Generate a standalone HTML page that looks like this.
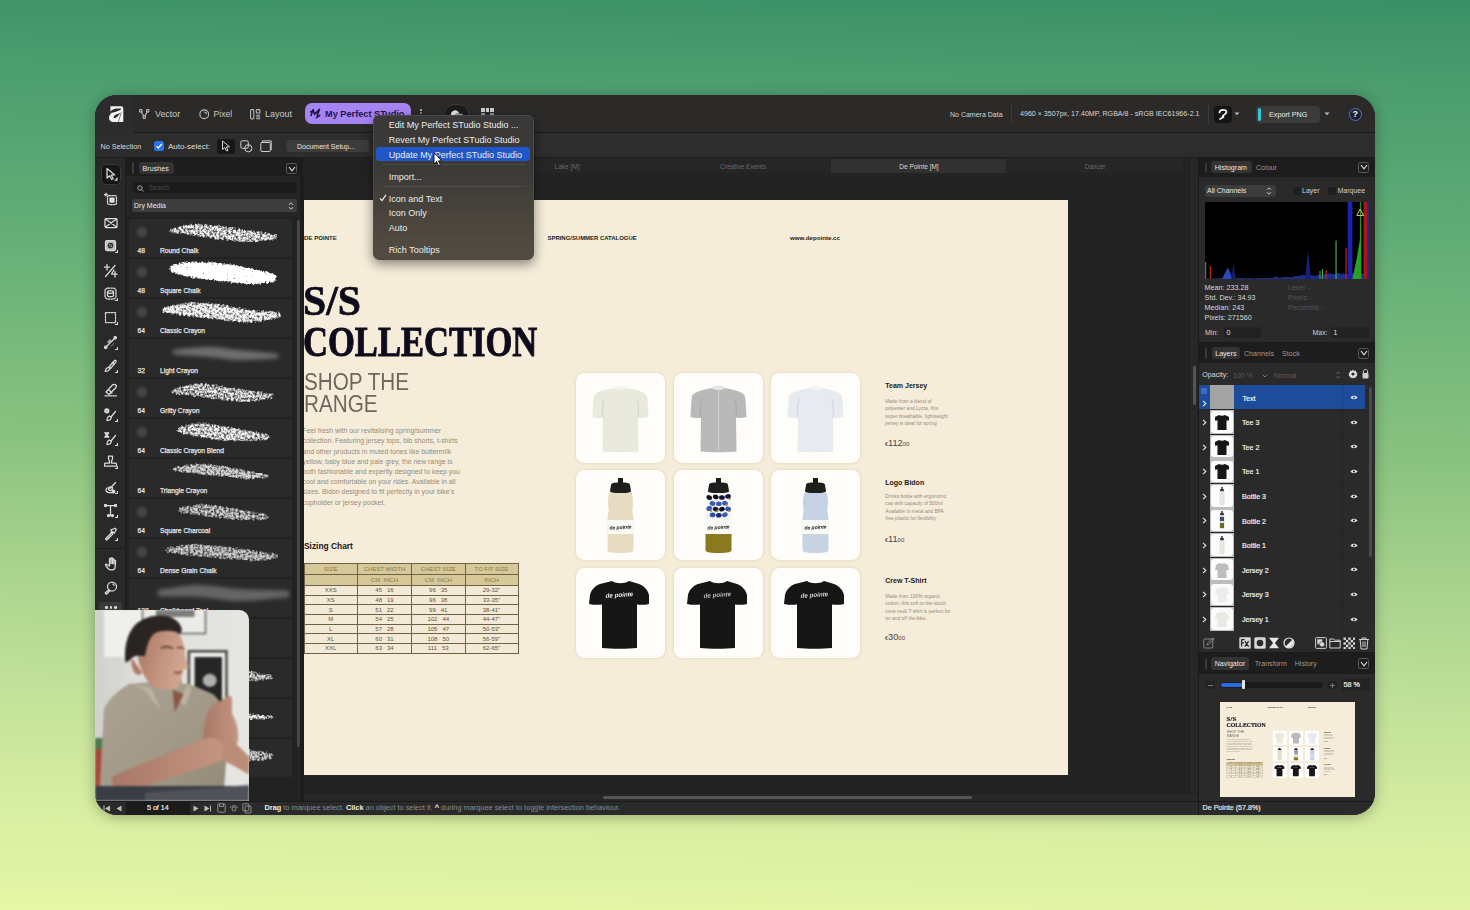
<!DOCTYPE html>
<html><head><meta charset="utf-8">
<style>
*{margin:0;padding:0;box-sizing:border-box}
html,body{width:1470px;height:910px;overflow:hidden}
body{position:relative;font-family:"Liberation Sans",sans-serif;background:linear-gradient(181deg,#3a8f66 0.0%,#4a9c6e 8.2%,#54a472 16.5%,#6db479 33.0%,#8ac380 49.5%,#aed690 65.9%,#c3e29a 76.9%,#d6eda1 87.9%,#e6f7a6 100.0%);color:#ddd}
.a{position:absolute}
.win{left:95px;top:95px;width:1280px;height:720px;border-radius:22px;background:#2a2a2a;overflow:hidden;box-shadow:0 2px 14px rgba(0,0,0,.30)}
.o{position:absolute;left:-95px;top:-95px;width:1470px;height:910px}
.t{position:absolute;white-space:nowrap;line-height:1}
.bt{font-size:6.7px;color:#e4e4e4;-webkit-text-stroke:0.25px #e4e4e4}
</style></head><body>
<div class="a win"><div class="o">
  <!-- top bar -->
  <div class="a" style="left:95px;top:95px;width:1280px;height:38px;background:#2b2a29;border-bottom:1px solid #1b1b1b"></div>
  <div class="a" style="left:95px;top:95px;width:39px;height:38px;background:#2c2c2c"></div>
  <!-- context bar -->
  <div class="a" style="left:95px;top:133px;width:1280px;height:25px;background:#2d2d2d;border-bottom:1px solid #1c1c1c"></div>

  <!-- TOPBAR CONTENT -->
  <svg class="a" style="left:108.6px;top:105.6px" width="15" height="17" viewBox="0 0 15 17"><path d="M1.4 0.3 H12 C13.6 0.3 14.3 1.3 14.3 2.8 V15.9 H4.5 C2 15.9 0 14.5 0 12 C0 10 1 8.5 2.4 7.3 L1.4 7.3 Z" fill="#f4f4f4"/><path d="M1.4 5.3 C3 4 5 2.9 8 2.6 L11.8 2.6 C12.4 2.8 12.2 3.6 11.4 4.1 C9 5 5 6.5 1.4 7.3 Z" fill="#2a2a2a"/><path d="M4.6 11 C4.6 9.8 6 9 8 8.2 L11.5 6.8 L8.5 10.5 C7 11.8 5.8 12.3 5.2 12 C4.8 11.8 4.6 11.5 4.6 11 Z" fill="#2a2a2a"/><path d="M12.2 6.4 L9.4 16.2" stroke="#2a2a2a" stroke-width="0.55"/></svg>
  <svg class="a" style="left:139px;top:109px" width="10.5" height="10" viewBox="0 0 10.5 10" fill="none" stroke="#bdbdbd" stroke-width="1.1"><circle cx="1.8" cy="1.8" r="1.3"/><circle cx="8.7" cy="1.8" r="1.3"/><circle cx="5.25" cy="8.2" r="1.3"/><path d="M2.4 3 L4.6 7.1 M8.1 3 L5.9 7.1"/></svg>
  <div class="t" style="left:155px;top:110px;font-size:8.9px;color:#c9c9c9">Vector</div>
  <svg class="a" style="left:198.5px;top:109px" width="10.5" height="10.5" viewBox="0 0 10.5 10.5" fill="none" stroke="#bdbdbd" stroke-width="1.1"><circle cx="5.25" cy="5.25" r="4.4"/><path d="M5.2 3 A2.3 2.3 0 0 1 7.5 5.3"/></svg>
  <div class="t" style="left:213.5px;top:110px;font-size:8.6px;color:#c9c9c9">Pixel</div>
  <svg class="a" style="left:249.5px;top:109px" width="11" height="10.5" viewBox="0 0 11 10.5" fill="none" stroke="#bdbdbd" stroke-width="1.05"><rect x="0.6" y="0.6" width="3.2" height="9.3" rx="0.8"/><rect x="6.3" y="0.6" width="3.6" height="3.4" rx="0.7"/><path d="M6.2 6.2 H10.2 M6.2 8 H10.2 M6.2 9.7 H10.2"/></svg>
  <div class="t" style="left:265px;top:110px;font-size:9px;color:#c9c9c9">Layout</div>
  <div class="a" style="left:304.5px;top:103px;width:106px;height:21px;border-radius:7px;background:#a784f3"></div>
  <svg class="a" style="left:300px;top:100px" width="22" height="22" viewBox="0 0 22 22" fill="none" stroke="#1c1044" stroke-width="1.5" stroke-linecap="round" stroke-linejoin="round"><path d="M11 15.6 L13.2 9.5 L14.5 14.4 L19.5 9.4 L17.2 15.4 M10.6 11.9 L13.2 10.8 M16.4 17.7 L19.8 15.3"/></svg>
  <div class="t" style="left:325px;top:109.5px;font-size:9.2px;font-weight:bold;color:#1f1548">My Perfect STudio</div>
  <div class="a" style="left:420px;top:108.5px;width:2.4px;height:2.4px;border-radius:50%;background:#d8d8d8"></div>
  <div class="a" style="left:420px;top:112px;width:2.2px;height:2.2px;border-radius:50%;background:#9a9a9a"></div>
  <div class="a" style="left:444px;top:104px;width:25px;height:20px;border-radius:10px;background:#1b1b1b;border:1px solid #3a3a3a"></div>
  <svg class="a" style="left:449.5px;top:107.5px" width="14" height="8" viewBox="0 0 14 8"><path d="M1 7.5 A4.2 4.2 0 0 1 9.2 5.5 L6 5.5 L5 7.5 Z" fill="#e6e6e6"/><path d="M5.5 6.2 H12.5" stroke="#cfcfcf" stroke-width="1.1"/></svg>
  <div class="a" style="left:481px;top:108px;width:3.5px;height:3.5px;background:#cfcfcf"></div>
  <div class="a" style="left:485.5px;top:108px;width:3.5px;height:3.5px;background:#cfcfcf"></div>
  <div class="a" style="left:490px;top:108px;width:3.5px;height:3.5px;background:#cfcfcf"></div>
  <div class="a" style="left:481px;top:112.5px;width:3.5px;height:3.5px;background:#8f8f8f"></div>
  <div class="a" style="left:490px;top:112.5px;width:3.5px;height:3.5px;background:#8f8f8f"></div>

  <div class="t" style="left:950px;top:110.5px;font-size:7px;color:#d6d6d6">No Camera Data</div>
  <div class="a" style="left:1011px;top:104px;width:1px;height:20px;background:#3a3a3a"></div>
  <div class="t" style="left:1020px;top:110.5px;font-size:7.1px;color:#d6d6d6">4960 × 3507px, 17.40MP, RGBA/8 - sRGB IEC61966-2.1</div>
  <div class="a" style="left:1208px;top:104px;width:1px;height:20px;background:#3a3a3a"></div>
  <div class="a" style="left:1214px;top:106px;width:18px;height:17px;border-radius:4px;background:#141414"></div>
  <svg class="a" style="left:1217px;top:108px" width="12" height="13" viewBox="0 0 12 13" fill="none" stroke="#f0f0f0" stroke-width="1.7" stroke-linecap="round"><path d="M2.5 4.5 C2.5 1.2 9.5 0.8 9.5 4 C9.5 6.5 6 6.3 5.5 8.5 M3 11 L6.5 9"/></svg>
  <svg class="a" style="left:1234px;top:112px" width="6" height="4" viewBox="0 0 6 4"><path d="M0.5 0.5 L3 3.2 L5.5 0.5 Z" fill="#bbb"/></svg>
  <div class="a" style="left:1256px;top:106px;width:64px;height:17px;border-radius:4px;background:#3b3b3b"></div>
  <div class="a" style="left:1258px;top:108px;width:3px;height:13px;border-radius:1.5px;background:#33c6d6"></div>
  <div class="t" style="left:1269px;top:110.5px;font-size:7.2px;color:#ececec">Export PNG</div>
  <svg class="a" style="left:1324px;top:112px" width="6" height="4" viewBox="0 0 6 4"><path d="M0.5 0.5 L3 3.2 L5.5 0.5 Z" fill="#bbb"/></svg>
  <div class="a" style="left:1349px;top:107.5px;width:13px;height:13px;border-radius:50%;border:1.2px solid #5877b8;background:#1c2233"></div>
  <div class="t" style="left:1352.5px;top:109.5px;font-size:9px;font-weight:bold;color:#f4f4f4">?</div>

  <!-- CONTEXT BAR CONTENT -->
  <div class="t" style="left:100.5px;top:143px;font-size:7.2px;color:#dcdcdc">No Selection</div>
  <div class="a" style="left:154px;top:141px;width:10px;height:10px;border-radius:2.5px;background:#2a73e6"></div>
  <svg class="a" style="left:155px;top:142px" width="8" height="8" viewBox="0 0 8 8" fill="none" stroke="#fff" stroke-width="1.3"><path d="M1.5 4.2 L3.3 6 L6.8 1.8"/></svg>
  <div class="t" style="left:168px;top:142.7px;font-size:8px;color:#dcdcdc">Auto-select:</div>
  <div class="a" style="left:217px;top:139px;width:18px;height:14.5px;border-radius:3px;background:#171717"></div>
  <svg class="a" style="left:221px;top:140px" width="10" height="12" viewBox="0 0 10 12" fill="none" stroke="#d6d6d6" stroke-width="1"><path d="M1.5 1 L1.5 9.5 L3.8 7.5 L5.5 11 L7 10.3 L5.4 7 L8.5 6.8 Z"/></svg>
  <svg class="a" style="left:239.5px;top:140px" width="13" height="13" viewBox="0 0 13 13" fill="none" stroke="#cfcfcf" stroke-width="1"><rect x="0.8" y="0.8" width="7.5" height="7.5" rx="1.5"/><circle cx="8.3" cy="8.3" r="3.6"/></svg>
  <svg class="a" style="left:259.5px;top:140px" width="12" height="12" viewBox="0 0 12 12" fill="none" stroke="#cfcfcf" stroke-width="1"><rect x="0.8" y="2.5" width="9.5" height="9" rx="1.2"/><path d="M2.5 2.5 V0.9 H11.2 V9.8 H10.3"/></svg>
  <div class="a" style="left:286px;top:139.5px;width:83px;height:12.5px;border-radius:3px;background:#3c3c3c"></div>
  <div class="t" style="left:297px;top:143px;font-size:7px;color:#e4e4e4">Document Setup...</div>
  <!-- tools column -->
  <div class="a" style="left:95px;top:158px;width:31px;height:643px;background:#292929;border-right:1px solid #1e1e1e"></div>
  <!-- brushes panel -->
  <div class="a" style="left:126px;top:158px;width:177px;height:643px;background:#252525"></div>
  <div class="a" style="left:126px;top:158px;width:177px;height:18px;background:#1d1d1d"></div>

  <!-- TOOLS CONTENT -->
  <div class="a" style="left:100.8px;top:163.8px;width:20px;height:21px;border-radius:4.5px;background:#161616;border:1px solid #3a3a3a"></div>
  <div class="a" style="left:95px;top:548px;width:31px;height:1px;background:#1e1e1e"></div>
  <div class="a" style="left:99px;top:602px;width:23px;height:10px;background:#3a3a3a;border-radius:2px"></div>
  <div class="a" style="left:105px;top:606px;width:2.5px;height:2.5px;background:#ddd;border-radius:50%"></div>
  <div class="a" style="left:109.5px;top:606px;width:2.5px;height:2.5px;background:#ddd;border-radius:50%"></div>
  <div class="a" style="left:114px;top:606px;width:2.5px;height:2.5px;background:#ddd;border-radius:50%"></div>
  <svg class="a" style="left:104px;top:167px" width="14" height="14" viewBox="0 0 14 14" fill="none" stroke="#dcdcdc" stroke-width="1.25" stroke-linecap="round" stroke-linejoin="round"><path d="M3 1.5 V11 L5.6 8.8 L7.6 12.5 L9.2 11.7 L7.3 8.2 L10.6 8 Z"/><path d="M13 11 V13 H11" /></svg>
  <svg class="a" style="left:104px;top:191.5px" width="14" height="14" viewBox="0 0 14 14" fill="none" stroke="#dcdcdc" stroke-width="1.25" stroke-linecap="round" stroke-linejoin="round"><path d="M2 1 V4 M0.5 2.5 H3.5"/><rect x="3.5" y="3.5" width="9" height="9" rx="1.5" stroke-dasharray="1.6 1.2"/><rect x="6" y="6" width="4" height="4" fill="#e0e0e0"/></svg>
  <svg class="a" style="left:104px;top:215.5px" width="14" height="14" viewBox="0 0 14 14" fill="none" stroke="#dcdcdc" stroke-width="1.25" stroke-linecap="round" stroke-linejoin="round"><rect x="1" y="2.5" width="12" height="9" rx="1"/><path d="M1.5 3 L12.5 11 M12.5 3 L1.5 11"/></svg>
  <svg class="a" style="left:104px;top:239px" width="14" height="14" viewBox="0 0 14 14" fill="none" stroke="#dcdcdc" stroke-width="1.25" stroke-linecap="round" stroke-linejoin="round"><rect x="1.5" y="1.5" width="10" height="10" rx="1.5" fill="#bdbdbd"/><circle cx="6.5" cy="6.5" r="2.2" stroke="#333"/><path d="M5 8 L8 5" stroke="#333"/><path d="M13.5 11.5 V13.5 H11.5"/></svg>
  <svg class="a" style="left:104px;top:263.6px" width="14" height="14" viewBox="0 0 14 14" fill="none" stroke="#dcdcdc" stroke-width="1.25" stroke-linecap="round" stroke-linejoin="round"><path d="M3 0.5 V6 M0.5 3 H5.5 M1.5 12.5 L11 1.5 M10 6 L7.5 10 H13 M11 7.5 V13"/></svg>
  <svg class="a" style="left:104px;top:286.7px" width="14" height="14" viewBox="0 0 14 14" fill="none" stroke="#dcdcdc" stroke-width="1.25" stroke-linecap="round" stroke-linejoin="round"><rect x="1" y="1" width="11" height="11" rx="3" stroke-dasharray="1.6 1.2"/><ellipse cx="6.5" cy="5" rx="3" ry="1.3"/><path d="M3.5 5 V8.5 C3.5 10 9.5 10 9.5 8.5 V5"/><path d="M13.5 11.5 V13.5 H11.5"/></svg>
  <svg class="a" style="left:104px;top:311.4px" width="14" height="14" viewBox="0 0 14 14" fill="none" stroke="#dcdcdc" stroke-width="1.25" stroke-linecap="round" stroke-linejoin="round"><rect x="1.5" y="1.5" width="10" height="10" stroke-dasharray="1.6 1.3"/><path d="M13.5 11.5 V13.5 H11.5"/></svg>
  <svg class="a" style="left:104px;top:335.6px" width="14" height="14" viewBox="0 0 14 14" fill="none" stroke="#dcdcdc" stroke-width="1.25" stroke-linecap="round" stroke-linejoin="round"><path d="M1.5 11.5 L11.5 1.5"/><circle cx="1.8" cy="11.3" r="1.2"/><circle cx="11.2" cy="1.8" r="1.2"/><path d="M3 6 L6 3 L8 5 L5 8 Z M6 11 L11 6 L9 9 Z" fill="#aaa" stroke="none"/><path d="M13.5 11.5 V13.5 H11.5"/></svg>
  <svg class="a" style="left:104px;top:359px" width="14" height="14" viewBox="0 0 14 14" fill="none" stroke="#dcdcdc" stroke-width="1.25" stroke-linecap="round" stroke-linejoin="round"><path d="M5 8 L10.5 1.5 C11.5 0.8 12.6 1.8 12 2.8 L6.5 9.5 Z"/><path d="M4.5 8.5 C2.5 8.5 1.5 10.5 1.3 12.5 C3.5 12.3 5.5 11.3 5.8 9.5"/><path d="M8.5 3.5 L10 5"/><path d="M13.5 11.5 V13.5 H11.5"/></svg>
  <svg class="a" style="left:104px;top:383px" width="14" height="14" viewBox="0 0 14 14" fill="none" stroke="#dcdcdc" stroke-width="1.25" stroke-linecap="round" stroke-linejoin="round"><path d="M2 9 L8.5 2 C9.5 1 11 1 11.8 2 C12.6 2.8 12.4 4 11.5 5 L5 11.5 Z M4.5 6.5 L8 10"/><path d="M1 12.8 H12.5" stroke-dasharray="1.6 1"/></svg>
  <svg class="a" style="left:104px;top:408px" width="14" height="14" viewBox="0 0 14 14" fill="none" stroke="#dcdcdc" stroke-width="1.25" stroke-linecap="round" stroke-linejoin="round"><circle cx="2.8" cy="2.8" r="2" fill="#bbb"/><path d="M7 9 L11.5 3.5 M5.5 8 C3.5 8.5 3 10.5 3 12.5 C5 12.5 7 11.5 7.3 9.5 Z"/><path d="M13.5 11.5 V13.5 H11.5"/></svg>
  <svg class="a" style="left:104px;top:431.5px" width="14" height="14" viewBox="0 0 14 14" fill="none" stroke="#dcdcdc" stroke-width="1.25" stroke-linecap="round" stroke-linejoin="round"><path d="M0.8 0.8 H4.8 L2.8 3 L4.8 5 H0.8 L2.8 3 Z" fill="#bbb"/><path d="M7 9 L11.5 3.5 M5.5 8 C3.5 8.5 3 10.5 3 12.5 C5 12.5 7 11.5 7.3 9.5 Z"/><path d="M13.5 11.5 V13.5 H11.5"/></svg>
  <svg class="a" style="left:104px;top:455px" width="14" height="14" viewBox="0 0 14 14" fill="none" stroke="#dcdcdc" stroke-width="1.25" stroke-linecap="round" stroke-linejoin="round"><path d="M4.5 1 H8.5 V3.5 C8.5 5 7.5 5.5 7.5 6.5 V8 H11.5 C12.2 8 12.5 8.5 12.5 9.2 V11 H0.5 V9.2 C0.5 8.5 0.8 8 1.5 8 H5.5 V6.5 C5.5 5.5 4.5 5 4.5 3.5 Z"/><path d="M13.5 11.5 V13.5 H11.5"/></svg>
  <svg class="a" style="left:104px;top:479.8px" width="14" height="14" viewBox="0 0 14 14" fill="none" stroke="#dcdcdc" stroke-width="1.25" stroke-linecap="round" stroke-linejoin="round"><path d="M3 8 C1 10 2 12.5 5 12.5 H9"/><path d="M6 8.5 L11.5 2.5 M5 7 C4 9 4.5 10.5 6.5 10.5 C8.5 10 9 8 8 7 Z"/><circle cx="9.5" cy="11.5" r="1.3" fill="#ddd"/><path d="M13.5 11.5 V13.5 H11.5"/></svg>
  <svg class="a" style="left:104px;top:504px" width="14" height="14" viewBox="0 0 14 14" fill="none" stroke="#dcdcdc" stroke-width="1.25" stroke-linecap="round" stroke-linejoin="round"><path d="M1.5 1.5 H11.5 M6.5 1.5 V11.5 M4.5 11.5 H8.5"/><circle cx="1.5" cy="1.5" r="1" fill="#ddd"/><circle cx="11.5" cy="1.5" r="1" fill="#ddd"/><circle cx="4.5" cy="11.5" r="1" fill="#ddd"/><circle cx="8.5" cy="11.5" r="1" fill="#ddd"/><path d="M13.5 11.5 V13.5 H11.5"/></svg>
  <svg class="a" style="left:104px;top:527px" width="14" height="14" viewBox="0 0 14 14" fill="none" stroke="#dcdcdc" stroke-width="1.25" stroke-linecap="round" stroke-linejoin="round"><path d="M1.5 12 L7.5 5.8 L8.8 7 L2.8 13 Z"/><path d="M7 5.3 L8 4.3 L6.8 3 L11 1.2 L12.3 2.5 L10.2 6.2 L9 5 L8.3 6 Z"/><path d="M13.5 11.5 V13.5 H11.5"/></svg>
  <svg class="a" style="left:104px;top:556.7px" width="14" height="14" viewBox="0 0 14 14" fill="none" stroke="#dcdcdc" stroke-width="1.25" stroke-linecap="round" stroke-linejoin="round"><path d="M3 7.5 C2 6.5 1 7.5 1.8 8.5 L4.5 12 C5.5 13 9 13.5 10.5 12 C11.5 10.5 11.5 8 11.5 4 C11.5 3 10.2 3 10 4 V7 V2.5 C10 1.5 8.5 1.5 8.5 2.5 V6.5 V1.5 C8.5 0.5 7 0.5 7 1.5 V6.5 V2.2 C7 1.2 5.5 1.2 5.5 2.2 V9 Z"/></svg>
  <svg class="a" style="left:104px;top:580.5px" width="14" height="14" viewBox="0 0 14 14" fill="none" stroke="#dcdcdc" stroke-width="1.25" stroke-linecap="round" stroke-linejoin="round"><circle cx="8" cy="5.5" r="4.5"/><path d="M5 8.5 L1.2 12 L2.5 13.2 L6 9.5"/><path d="M9 3 L10 4.2"/></svg>

  <!-- BRUSHES CONTENT -->
  <div class="a" style="left:132px;top:162px;width:2px;height:12px;background:#3c3c3c;border-radius:1px"></div>
  <div class="a" style="left:139px;top:161.5px;width:34.5px;height:12.5px;border-radius:3px;background:#333"></div>
  <div class="t" style="left:142.5px;top:164.5px;font-size:7.2px;color:#e6e6e6">Brushes</div>
  <div class="a" style="left:286px;top:163px;width:11px;height:11px;border-radius:2.5px;border:1px solid #5a5a5a"></div>
  <svg class="a" style="left:287.5px;top:165.5px" width="8" height="6" viewBox="0 0 8 6" fill="none" stroke="#e0e0e0" stroke-width="1.2"><path d="M1 1 L4 4.8 L7 1"/></svg>
  <div class="a" style="left:132.5px;top:182px;width:164.5px;height:11px;border-radius:3px;background:#1b1b1b"></div>
  <svg class="a" style="left:137px;top:184.5px" width="7" height="7" viewBox="0 0 7 7" fill="none" stroke="#aaa" stroke-width="1"><circle cx="3" cy="3" r="2.2"/><path d="M4.6 4.6 L6.5 6.5"/></svg>
  <div class="t" style="left:149px;top:184.5px;font-size:6.5px;color:#4a4a4a">Search</div>
  <div class="a" style="left:131.5px;top:199px;width:165.5px;height:12.5px;border-radius:3px;background:#3d3d3d"></div>
  <div class="t" style="left:134px;top:201.8px;font-size:7px;color:#e8e8e8">Dry Media</div>
  <svg class="a" style="left:288px;top:200.5px" width="6" height="10" viewBox="0 0 6 10" fill="none" stroke="#cfcfcf" stroke-width="1"><path d="M1 3.8 L3 1.8 L5 3.8 M1 6.2 L3 8.2 L5 6.2"/></svg>
  <div class="a" style="left:126px;top:217px;width:172px;height:584px;background:#222"></div>
  <svg width="0" height="0" style="position:absolute"><defs>
<filter id="ch0" x="-10%" y="-50%" width="120%" height="200%" color-interpolation-filters="sRGB"><feGaussianBlur in="SourceGraphic" stdDeviation="1.7" result="b"/><feTurbulence type="fractalNoise" baseFrequency="0.42" numOctaves="3" seed="3" result="n"/><feColorMatrix in="n" type="matrix" values="0 0 0 0 1 0 0 0 0 1 0 0 0 0 1 1 0 0 0 0" result="na"/><feComposite in="b" in2="na" operator="arithmetic" k1="0" k2="2.5" k3="2.5" k4="-3.00" result="c"/><feGaussianBlur in="c" stdDeviation="0.3"/></filter>
<filter id="ch1" x="-10%" y="-50%" width="120%" height="200%" color-interpolation-filters="sRGB"><feGaussianBlur in="SourceGraphic" stdDeviation="1.7" result="b"/><feTurbulence type="fractalNoise" baseFrequency="0.42" numOctaves="3" seed="11" result="n"/><feColorMatrix in="n" type="matrix" values="0 0 0 0 1 0 0 0 0 1 0 0 0 0 1 1 0 0 0 0" result="na"/><feComposite in="b" in2="na" operator="arithmetic" k1="0" k2="3.2" k3="3.2" k4="-3.11" result="c"/><feGaussianBlur in="c" stdDeviation="0.3"/></filter>
<filter id="ch2" x="-10%" y="-50%" width="120%" height="200%" color-interpolation-filters="sRGB"><feGaussianBlur in="SourceGraphic" stdDeviation="1.7" result="b"/><feTurbulence type="fractalNoise" baseFrequency="0.42" numOctaves="3" seed="5" result="n"/><feColorMatrix in="n" type="matrix" values="0 0 0 0 1 0 0 0 0 1 0 0 0 0 1 1 0 0 0 0" result="na"/><feComposite in="b" in2="na" operator="arithmetic" k1="0" k2="2.5" k3="2.5" k4="-2.83" result="c"/><feGaussianBlur in="c" stdDeviation="0.3"/></filter>
<filter id="ch3" x="-10%" y="-50%" width="120%" height="200%" color-interpolation-filters="sRGB"><feGaussianBlur in="SourceGraphic" stdDeviation="1.7" result="b"/><feTurbulence type="fractalNoise" baseFrequency="0.42" numOctaves="3" seed="7" result="n"/><feColorMatrix in="n" type="matrix" values="0 0 0 0 1 0 0 0 0 1 0 0 0 0 1 1 0 0 0 0" result="na"/><feComposite in="b" in2="na" operator="arithmetic" k1="0" k2="2.2" k3="2.2" k4="-2.29" result="c"/><feGaussianBlur in="c" stdDeviation="0.3"/></filter>
<filter id="ch4" x="-10%" y="-50%" width="120%" height="200%" color-interpolation-filters="sRGB"><feGaussianBlur in="SourceGraphic" stdDeviation="1.7" result="b"/><feTurbulence type="fractalNoise" baseFrequency="0.42" numOctaves="3" seed="9" result="n"/><feColorMatrix in="n" type="matrix" values="0 0 0 0 1 0 0 0 0 1 0 0 0 0 1 1 0 0 0 0" result="na"/><feComposite in="b" in2="na" operator="arithmetic" k1="0" k2="2.3" k3="2.3" k4="-2.80" result="c"/><feGaussianBlur in="c" stdDeviation="0.3"/></filter>
<filter id="ch5" x="-10%" y="-50%" width="120%" height="200%" color-interpolation-filters="sRGB"><feGaussianBlur in="SourceGraphic" stdDeviation="1.7" result="b"/><feTurbulence type="fractalNoise" baseFrequency="0.42" numOctaves="3" seed="13" result="n"/><feColorMatrix in="n" type="matrix" values="0 0 0 0 1 0 0 0 0 1 0 0 0 0 1 1 0 0 0 0" result="na"/><feComposite in="b" in2="na" operator="arithmetic" k1="0" k2="2.4" k3="2.4" k4="-2.82" result="c"/><feGaussianBlur in="c" stdDeviation="0.3"/></filter>
<filter id="ch6" x="-10%" y="-50%" width="120%" height="200%" color-interpolation-filters="sRGB"><feGaussianBlur in="SourceGraphic" stdDeviation="1.7" result="b"/><feTurbulence type="fractalNoise" baseFrequency="0.42" numOctaves="3" seed="15" result="n"/><feColorMatrix in="n" type="matrix" values="0 0 0 0 1 0 0 0 0 1 0 0 0 0 1 1 0 0 0 0" result="na"/><feComposite in="b" in2="na" operator="arithmetic" k1="0" k2="2.3" k3="2.3" k4="-2.60" result="c"/><feGaussianBlur in="c" stdDeviation="0.3"/></filter>
<filter id="ch7" x="-10%" y="-50%" width="120%" height="200%" color-interpolation-filters="sRGB"><feGaussianBlur in="SourceGraphic" stdDeviation="1.7" result="b"/><feTurbulence type="fractalNoise" baseFrequency="0.42" numOctaves="3" seed="17" result="n"/><feColorMatrix in="n" type="matrix" values="0 0 0 0 1 0 0 0 0 1 0 0 0 0 1 1 0 0 0 0" result="na"/><feComposite in="b" in2="na" operator="arithmetic" k1="0" k2="2.2" k3="2.2" k4="-2.64" result="c"/><feGaussianBlur in="c" stdDeviation="0.3"/></filter>
<filter id="ch8" x="-10%" y="-50%" width="120%" height="200%" color-interpolation-filters="sRGB"><feGaussianBlur in="SourceGraphic" stdDeviation="1.7" result="b"/><feTurbulence type="fractalNoise" baseFrequency="0.42" numOctaves="3" seed="19" result="n"/><feColorMatrix in="n" type="matrix" values="0 0 0 0 1 0 0 0 0 1 0 0 0 0 1 1 0 0 0 0" result="na"/><feComposite in="b" in2="na" operator="arithmetic" k1="0" k2="2.3" k3="2.3" k4="-2.69" result="c"/><feGaussianBlur in="c" stdDeviation="0.3"/></filter>
<filter id="ch9" x="-10%" y="-50%" width="120%" height="200%" color-interpolation-filters="sRGB"><feGaussianBlur in="SourceGraphic" stdDeviation="1.7" result="b"/><feTurbulence type="fractalNoise" baseFrequency="0.42" numOctaves="3" seed="21" result="n"/><feColorMatrix in="n" type="matrix" values="0 0 0 0 1 0 0 0 0 1 0 0 0 0 1 1 0 0 0 0" result="na"/><feComposite in="b" in2="na" operator="arithmetic" k1="0" k2="2.8" k3="2.8" k4="-2.67" result="c"/><feGaussianBlur in="c" stdDeviation="0.3"/></filter>
<filter id="ch10" x="-10%" y="-50%" width="120%" height="200%" color-interpolation-filters="sRGB"><feGaussianBlur in="SourceGraphic" stdDeviation="1.7" result="b"/><feTurbulence type="fractalNoise" baseFrequency="0.42" numOctaves="3" seed="23" result="n"/><feColorMatrix in="n" type="matrix" values="0 0 0 0 1 0 0 0 0 1 0 0 0 0 1 1 0 0 0 0" result="na"/><feComposite in="b" in2="na" operator="arithmetic" k1="0" k2="2.3" k3="2.3" k4="-2.60" result="c"/><feGaussianBlur in="c" stdDeviation="0.3"/></filter>
<filter id="ch11" x="-10%" y="-50%" width="120%" height="200%" color-interpolation-filters="sRGB"><feGaussianBlur in="SourceGraphic" stdDeviation="1.7" result="b"/><feTurbulence type="fractalNoise" baseFrequency="0.42" numOctaves="3" seed="25" result="n"/><feColorMatrix in="n" type="matrix" values="0 0 0 0 1 0 0 0 0 1 0 0 0 0 1 1 0 0 0 0" result="na"/><feComposite in="b" in2="na" operator="arithmetic" k1="0" k2="2.3" k3="2.3" k4="-2.69" result="c"/><feGaussianBlur in="c" stdDeviation="0.3"/></filter>
<filter id="ch12" x="-10%" y="-50%" width="120%" height="200%" color-interpolation-filters="sRGB"><feGaussianBlur in="SourceGraphic" stdDeviation="1.7" result="b"/><feTurbulence type="fractalNoise" baseFrequency="0.42" numOctaves="3" seed="27" result="n"/><feColorMatrix in="n" type="matrix" values="0 0 0 0 1 0 0 0 0 1 0 0 0 0 1 1 0 0 0 0" result="na"/><feComposite in="b" in2="na" operator="arithmetic" k1="0" k2="2.6" k3="2.6" k4="-2.93" result="c"/><feGaussianBlur in="c" stdDeviation="0.3"/></filter>
<filter id="ch13" x="-10%" y="-50%" width="120%" height="200%" color-interpolation-filters="sRGB"><feGaussianBlur in="SourceGraphic" stdDeviation="1.7" result="b"/><feTurbulence type="fractalNoise" baseFrequency="0.42" numOctaves="3" seed="29" result="n"/><feColorMatrix in="n" type="matrix" values="0 0 0 0 1 0 0 0 0 1 0 0 0 0 1 1 0 0 0 0" result="na"/><feComposite in="b" in2="na" operator="arithmetic" k1="0" k2="2.3" k3="2.3" k4="-2.69" result="c"/><feGaussianBlur in="c" stdDeviation="0.3"/></filter>
<filter id="dab" x="-20%" y="-20%" width="140%" height="140%"><feTurbulence type="fractalNoise" baseFrequency="0.7" numOctaves="2" seed="5" result="n"/><feColorMatrix in="n" type="matrix" values="0 0 0 0 1 0 0 0 0 1 0 0 0 0 1 1.5 0 0 0 -0.4" result="na"/><feComposite in="SourceGraphic" in2="na" operator="in" result="c"/><feGaussianBlur in="c" stdDeviation="0.5"/></filter>
<filter id="soft" x="-10%" y="-50%" width="120%" height="200%"><feGaussianBlur stdDeviation="2.2"/></filter>
</defs></svg>
  <div class="a" style="left:128.5px;top:218.7px;width:163px;height:38.5px;background:#2a2a2a"></div>
  <svg class="a" style="left:128.5px;top:218.7px;opacity:0.95" width="163" height="38" viewBox="0 0 163 38"><path d="M42.0 9.0 L43.0 8.7 L44.3 8.2 L45.8 7.6 L47.5 7.0 L49.3 6.3 L51.3 5.7 L53.5 5.1 L55.7 4.6 L58.1 4.2 L60.6 4.0 L63.4 3.9 L66.3 3.8 L69.4 3.9 L72.7 4.0 L76.1 4.2 L79.5 4.5 L82.9 4.7 L86.2 5.0 L89.4 5.3 L92.5 5.7 L95.6 6.0 L98.7 6.5 L101.7 6.9 L104.7 7.4 L107.7 7.9 L110.6 8.4 L113.6 8.9 L116.4 9.4 L119.3 9.9 L122.2 10.3 L125.2 10.8 L128.3 11.3 L131.4 11.8 L134.4 12.2 L137.3 12.7 L140.0 13.1 L142.4 13.4 L144.4 13.8 L146.0 14.0 A4.0 4.0 0 0 1 146.0 22.0 L146.0 22.0 L144.4 22.1 L142.4 22.4 L140.0 22.6 L137.3 22.9 L134.4 23.2 L131.4 23.5 L128.3 23.7 L125.2 23.9 L122.2 24.0 L119.3 24.0 L116.4 23.9 L113.6 23.8 L110.6 23.6 L107.7 23.3 L104.7 23.0 L101.7 22.7 L98.7 22.4 L95.6 22.0 L92.5 21.7 L89.4 21.3 L86.2 20.9 L82.9 20.4 L79.5 19.9 L76.1 19.4 L72.7 18.9 L69.4 18.4 L66.3 17.9 L63.4 17.5 L60.6 17.1 L58.1 16.8 L55.7 16.5 L53.5 16.2 L51.3 16.0 L49.3 15.7 L47.5 15.6 L45.8 15.4 L44.3 15.2 L43.0 15.1 L42.0 15.0 A3.0 3.0 0 0 1 42.0 9.0 Z" fill="#fff" filter="url(#ch0)"/></svg>
  <div class="a" style="left:135.5px;top:225.7px;width:12.5px;height:12.5px;border-radius:50%;background:radial-gradient(circle,#484848 0%,#404040 45%,#363636 65%,rgba(54,54,54,0) 72%)"></div>
  <div class="t bt" style="left:137.5px;top:247.7px">48</div>
  <div class="t bt" style="left:160px;top:247.7px">Round Chalk</div>
  <div class="a" style="left:128.5px;top:258.7px;width:163px;height:38.5px;background:#2a2a2a"></div>
  <svg class="a" style="left:128.5px;top:258.7px;opacity:1.0" width="163" height="38" viewBox="0 0 163 38"><path d="M44.0 6.0 L44.9 5.8 L46.0 5.4 L47.3 5.0 L48.7 4.6 L50.3 4.1 L52.0 3.7 L53.9 3.3 L56.0 2.9 L58.2 2.6 L60.6 2.5 L63.3 2.4 L66.2 2.3 L69.3 2.4 L72.6 2.4 L76.0 2.5 L79.4 2.7 L82.8 2.9 L86.2 3.1 L89.4 3.4 L92.5 3.7 L95.6 4.0 L98.7 4.5 L101.8 5.0 L104.9 5.5 L107.9 6.1 L110.9 6.6 L113.8 7.2 L116.6 7.8 L119.3 8.4 L122.0 8.9 L124.8 9.5 L127.6 10.2 L130.3 10.8 L133.0 11.5 L135.5 12.1 L137.8 12.7 L139.9 13.2 L141.6 13.7 L143.0 14.0 A5.0 5.0 0 0 1 143.0 24.0 L143.0 24.0 L141.6 24.1 L139.9 24.3 L137.8 24.5 L135.5 24.7 L133.0 25.0 L130.3 25.2 L127.6 25.4 L124.8 25.5 L122.0 25.5 L119.3 25.5 L116.6 25.3 L113.8 25.1 L110.9 24.9 L107.9 24.6 L104.9 24.2 L101.8 23.8 L98.7 23.5 L95.6 23.1 L92.5 22.7 L89.4 22.3 L86.2 21.9 L82.8 21.6 L79.4 21.2 L76.0 20.7 L72.6 20.3 L69.3 19.9 L66.2 19.5 L63.3 19.0 L60.6 18.6 L58.2 18.2 L56.0 17.7 L53.9 17.1 L52.0 16.6 L50.3 16.1 L48.7 15.5 L47.3 15.1 L46.0 14.6 L44.9 14.3 L44.0 14.0 A4.0 4.0 0 0 1 44.0 6.0 Z" fill="#fff" filter="url(#ch1)"/></svg>
  <div class="a" style="left:135.5px;top:265.7px;width:12.5px;height:12.5px;border-radius:50%;background:radial-gradient(circle,#484848 0%,#404040 45%,#363636 65%,rgba(54,54,54,0) 72%)"></div>
  <div class="t bt" style="left:137.5px;top:287.7px">48</div>
  <div class="t bt" style="left:160px;top:287.7px">Square Chalk</div>
  <div class="a" style="left:128.5px;top:298.7px;width:163px;height:38.5px;background:#2a2a2a"></div>
  <svg class="a" style="left:128.5px;top:298.7px;opacity:0.95" width="163" height="38" viewBox="0 0 163 38"><path d="M36.0 7.0 L37.4 6.7 L39.3 6.3 L41.4 5.7 L43.8 5.2 L46.4 4.5 L49.2 4.0 L52.0 3.4 L55.0 3.0 L57.9 2.6 L60.7 2.5 L63.6 2.4 L66.7 2.5 L69.9 2.6 L73.1 2.8 L76.4 3.0 L79.7 3.3 L83.0 3.6 L86.3 4.0 L89.4 4.3 L92.5 4.7 L95.6 5.1 L98.6 5.6 L101.6 6.2 L104.5 6.8 L107.5 7.3 L110.4 7.9 L113.3 8.5 L116.3 9.0 L119.3 9.4 L122.3 9.8 L125.6 10.1 L129.0 10.5 L132.5 10.8 L135.9 11.0 L139.2 11.3 L142.2 11.5 L144.9 11.7 L147.2 11.9 L149.0 12.0 A4.0 4.0 0 0 1 149.0 20.0 L149.0 20.0 L147.2 20.3 L144.9 20.8 L142.2 21.3 L139.2 21.9 L135.9 22.5 L132.5 23.1 L129.0 23.6 L125.6 24.1 L122.3 24.4 L119.3 24.5 L116.3 24.5 L113.3 24.3 L110.4 24.1 L107.5 23.7 L104.5 23.3 L101.6 22.9 L98.6 22.5 L95.6 22.0 L92.5 21.7 L89.4 21.3 L86.3 21.0 L83.0 20.7 L79.7 20.4 L76.4 20.1 L73.1 19.8 L69.9 19.5 L66.7 19.2 L63.6 18.9 L60.7 18.6 L57.9 18.2 L55.0 17.9 L52.0 17.4 L49.2 17.0 L46.4 16.6 L43.8 16.2 L41.4 15.8 L39.3 15.5 L37.4 15.2 L36.0 15.0 A4.0 4.0 0 0 1 36.0 7.0 Z" fill="#fff" filter="url(#ch2)"/></svg>
  <div class="a" style="left:135.5px;top:305.7px;width:12.5px;height:12.5px;border-radius:50%;background:radial-gradient(circle,#484848 0%,#404040 45%,#363636 65%,rgba(54,54,54,0) 72%)"></div>
  <div class="t bt" style="left:137.5px;top:327.7px">64</div>
  <div class="t bt" style="left:160px;top:327.7px">Classic Crayon</div>
  <div class="a" style="left:128.5px;top:338.7px;width:163px;height:38.5px;background:#2a2a2a"></div>
  <svg class="a" style="left:128.5px;top:338.7px;opacity:0.32" width="163" height="38" viewBox="0 0 163 38"><path d="M46.0 10.5 L47.5 10.4 L49.4 10.2 L51.6 10.0 L54.1 9.7 L56.8 9.5 L59.6 9.2 L62.6 8.9 L65.7 8.7 L68.7 8.4 L71.7 8.3 L74.6 8.1 L77.4 8.0 L80.0 8.0 L82.4 8.0 L84.8 8.2 L87.1 8.3 L89.3 8.5 L91.5 8.7 L93.7 9.0 L95.9 9.3 L98.1 9.6 L100.4 9.9 L102.7 10.2 L105.0 10.5 L107.5 10.7 L110.0 11.0 L112.7 11.3 L115.7 11.5 L118.8 11.8 L122.1 12.2 L125.4 12.5 L128.7 12.8 L132.0 13.1 L135.1 13.4 L138.1 13.7 L140.8 13.9 L143.3 14.1 L145.3 14.3 L147.0 14.5 A2.5 2.5 0 0 1 147.0 19.5 L147.0 19.5 L145.3 19.6 L143.3 19.7 L140.8 19.8 L138.1 20.0 L135.1 20.2 L132.0 20.4 L128.7 20.5 L125.4 20.7 L122.1 20.8 L118.8 20.9 L115.7 21.0 L112.7 21.0 L110.0 21.0 L107.5 20.9 L105.0 20.8 L102.7 20.6 L100.4 20.4 L98.1 20.2 L95.9 19.9 L93.7 19.6 L91.5 19.3 L89.3 19.0 L87.1 18.8 L84.8 18.5 L82.4 18.2 L80.0 18.0 L77.4 17.8 L74.6 17.6 L71.7 17.3 L68.7 17.1 L65.7 16.9 L62.6 16.7 L59.6 16.5 L56.8 16.3 L54.1 16.1 L51.6 15.9 L49.4 15.7 L47.5 15.6 L46.0 15.5 A2.5 2.5 0 0 1 46.0 10.5 Z" fill="#fff" filter="url(#soft)"/></svg>
  <div class="t bt" style="left:137.5px;top:367.7px">32</div>
  <div class="t bt" style="left:160px;top:367.7px">Light Crayon</div>
  <div class="a" style="left:128.5px;top:378.7px;width:163px;height:38.5px;background:#2a2a2a"></div>
  <svg class="a" style="left:128.5px;top:378.7px;opacity:0.95" width="163" height="38" viewBox="0 0 163 38"><path d="M45.0 8.0 L46.5 7.7 L48.4 7.1 L50.7 6.5 L53.2 5.9 L56.0 5.2 L58.9 4.5 L61.9 3.9 L64.9 3.4 L67.8 3.1 L70.7 3.0 L73.7 3.1 L76.8 3.3 L80.0 3.7 L83.3 4.2 L86.5 4.7 L89.8 5.3 L92.9 5.8 L95.9 6.3 L98.7 6.8 L101.3 7.2 L103.6 7.5 L105.8 7.8 L107.8 8.2 L109.8 8.5 L111.7 8.7 L113.6 9.0 L115.5 9.3 L117.4 9.6 L119.5 9.9 L121.7 10.2 L124.1 10.6 L126.7 10.9 L129.3 11.3 L131.9 11.6 L134.4 12.0 L136.8 12.3 L138.9 12.6 L140.6 12.8 L142.0 13.0 A4.0 4.0 0 0 1 142.0 21.0 L142.0 21.0 L140.6 21.2 L138.9 21.5 L136.8 21.8 L134.4 22.2 L131.9 22.6 L129.3 23.0 L126.7 23.4 L124.1 23.7 L121.7 23.9 L119.5 24.0 L117.4 24.1 L115.5 24.1 L113.6 24.1 L111.7 24.0 L109.8 23.9 L107.8 23.7 L105.8 23.6 L103.6 23.4 L101.3 23.1 L98.7 22.9 L95.9 22.5 L92.9 22.2 L89.8 21.7 L86.5 21.3 L83.3 20.8 L80.0 20.4 L76.8 19.9 L73.7 19.5 L70.7 19.1 L67.8 18.7 L64.9 18.4 L61.9 18.0 L58.9 17.6 L56.0 17.3 L53.2 17.0 L50.7 16.7 L48.4 16.4 L46.5 16.2 L45.0 16.0 A4.0 4.0 0 0 1 45.0 8.0 Z" fill="#fff" filter="url(#ch4)"/></svg>
  <div class="a" style="left:135.5px;top:385.7px;width:12.5px;height:12.5px;border-radius:50%;background:radial-gradient(circle,#484848 0%,#404040 45%,#363636 65%,rgba(54,54,54,0) 72%)"></div>
  <div class="t bt" style="left:137.5px;top:407.7px">64</div>
  <div class="t bt" style="left:160px;top:407.7px">Gritty Crayon</div>
  <div class="a" style="left:128.5px;top:418.7px;width:163px;height:38.5px;background:#2a2a2a"></div>
  <svg class="a" style="left:128.5px;top:418.7px;opacity:0.95" width="163" height="38" viewBox="0 0 163 38"><path d="M50.0 7.0 L50.9 6.8 L51.9 6.5 L53.0 6.2 L54.4 5.8 L55.8 5.4 L57.3 5.0 L59.0 4.5 L60.7 4.1 L62.5 3.8 L64.3 3.5 L66.2 3.2 L68.1 3.1 L70.0 3.0 L72.0 3.0 L74.0 3.1 L76.1 3.3 L78.2 3.5 L80.4 3.8 L82.7 4.1 L85.0 4.5 L87.4 4.9 L89.9 5.3 L92.3 5.7 L94.8 6.1 L97.4 6.6 L100.0 7.0 L102.8 7.5 L105.8 8.0 L109.0 8.6 L112.3 9.2 L115.8 9.8 L119.2 10.4 L122.5 11.1 L125.8 11.7 L128.8 12.3 L131.7 12.8 L134.2 13.3 L136.3 13.7 L138.0 14.0 A4.0 4.0 0 0 1 138.0 22.0 L138.0 22.0 L136.3 22.1 L134.2 22.1 L131.7 22.3 L128.8 22.4 L125.8 22.5 L122.5 22.7 L119.2 22.8 L115.8 22.9 L112.3 23.0 L109.0 23.1 L105.8 23.1 L102.8 23.1 L100.0 23.0 L97.4 22.9 L94.8 22.7 L92.3 22.4 L89.9 22.1 L87.4 21.8 L85.0 21.5 L82.7 21.1 L80.4 20.8 L78.2 20.4 L76.1 20.0 L74.0 19.7 L72.0 19.3 L70.0 19.0 L68.1 18.7 L66.2 18.3 L64.3 18.0 L62.5 17.6 L60.7 17.3 L59.0 16.9 L57.3 16.6 L55.8 16.2 L54.4 15.9 L53.0 15.6 L51.9 15.4 L50.9 15.2 L50.0 15.0 A4.0 4.0 0 0 1 50.0 7.0 Z" fill="#fff" filter="url(#ch5)"/></svg>
  <div class="a" style="left:135.5px;top:425.7px;width:12.5px;height:12.5px;border-radius:50%;background:radial-gradient(circle,#484848 0%,#404040 45%,#363636 65%,rgba(54,54,54,0) 72%)"></div>
  <div class="t bt" style="left:137.5px;top:447.7px">64</div>
  <div class="t bt" style="left:160px;top:447.7px">Classic Crayon Blend</div>
  <div class="a" style="left:128.5px;top:458.7px;width:163px;height:38.5px;background:#2a2a2a"></div>
  <svg class="a" style="left:128.5px;top:458.7px;opacity:0.8" width="163" height="38" viewBox="0 0 163 38"><path d="M46.0 7.0 L47.4 6.8 L49.3 6.5 L51.4 6.1 L53.8 5.7 L56.5 5.3 L59.2 4.9 L62.1 4.5 L65.0 4.2 L67.9 4.0 L70.7 4.0 L73.6 4.1 L76.7 4.3 L79.9 4.5 L83.2 4.8 L86.5 5.2 L89.7 5.6 L92.9 6.0 L95.9 6.4 L98.7 6.8 L101.3 7.2 L103.6 7.6 L105.9 8.0 L108.0 8.4 L110.0 8.8 L112.0 9.3 L113.9 9.7 L115.7 10.1 L117.6 10.5 L119.5 10.9 L121.5 11.3 L123.6 11.6 L125.7 12.0 L127.9 12.4 L130.0 12.7 L132.0 13.0 L133.9 13.3 L135.5 13.6 L136.9 13.8 L138.0 14.0 A3.0 3.0 0 0 1 138.0 20.0 L138.0 20.0 L136.9 20.1 L135.5 20.2 L133.9 20.3 L132.0 20.5 L130.0 20.6 L127.9 20.8 L125.7 20.9 L123.6 21.0 L121.5 21.0 L119.5 21.0 L117.6 20.9 L115.7 20.8 L113.9 20.6 L112.0 20.4 L110.0 20.2 L108.0 19.9 L105.9 19.7 L103.6 19.4 L101.3 19.1 L98.7 18.9 L95.9 18.6 L92.9 18.3 L89.7 18.0 L86.5 17.7 L83.2 17.4 L79.9 17.0 L76.7 16.7 L73.6 16.4 L70.7 16.1 L67.9 15.8 L65.0 15.4 L62.1 15.1 L59.2 14.7 L56.5 14.4 L53.8 14.0 L51.4 13.7 L49.3 13.4 L47.4 13.2 L46.0 13.0 A3.0 3.0 0 0 1 46.0 7.0 Z" fill="#fff" filter="url(#ch6)"/></svg>
  <div class="t bt" style="left:137.5px;top:487.7px">64</div>
  <div class="t bt" style="left:160px;top:487.7px">Triangle Crayon</div>
  <div class="a" style="left:128.5px;top:498.7px;width:163px;height:38.5px;background:#2a2a2a"></div>
  <svg class="a" style="left:128.5px;top:498.7px;opacity:0.8" width="163" height="38" viewBox="0 0 163 38"><path d="M52.0 7.0 L53.0 6.8 L54.2 6.6 L55.6 6.4 L57.2 6.1 L58.9 5.7 L60.7 5.4 L62.6 5.1 L64.6 4.8 L66.7 4.5 L68.7 4.3 L70.8 4.1 L72.9 4.0 L75.0 4.0 L77.1 4.1 L79.2 4.2 L81.4 4.4 L83.6 4.6 L85.9 4.9 L88.3 5.3 L90.6 5.6 L93.0 6.0 L95.4 6.4 L97.8 6.8 L100.2 7.2 L102.6 7.6 L105.0 8.0 L107.5 8.4 L110.1 8.9 L112.9 9.4 L115.7 9.9 L118.6 10.4 L121.5 11.0 L124.3 11.5 L126.9 12.0 L129.4 12.5 L131.8 13.0 L133.8 13.4 L135.6 13.7 L137.0 14.0 A4.0 4.0 0 0 1 137.0 22.0 L137.0 22.0 L135.6 22.0 L133.8 22.0 L131.8 22.1 L129.4 22.1 L126.9 22.2 L124.3 22.2 L121.5 22.3 L118.6 22.3 L115.7 22.3 L112.9 22.3 L110.1 22.2 L107.5 22.1 L105.0 22.0 L102.6 21.8 L100.2 21.6 L97.8 21.3 L95.4 21.0 L93.0 20.7 L90.6 20.4 L88.3 20.0 L85.9 19.6 L83.6 19.3 L81.4 18.9 L79.2 18.6 L77.1 18.3 L75.0 18.0 L72.9 17.7 L70.8 17.5 L68.7 17.2 L66.7 16.9 L64.6 16.6 L62.6 16.4 L60.7 16.1 L58.9 15.9 L57.2 15.7 L55.6 15.5 L54.2 15.3 L53.0 15.1 L52.0 15.0 A4.0 4.0 0 0 1 52.0 7.0 Z" fill="#fff" filter="url(#ch7)"/></svg>
  <div class="a" style="left:135.5px;top:505.7px;width:12.5px;height:12.5px;border-radius:50%;background:radial-gradient(circle,#484848 0%,#404040 45%,#363636 65%,rgba(54,54,54,0) 72%)"></div>
  <div class="t bt" style="left:137.5px;top:527.7px">64</div>
  <div class="t bt" style="left:160px;top:527.7px">Square Charcoal</div>
  <div class="a" style="left:128.5px;top:538.7px;width:163px;height:38.5px;background:#2a2a2a"></div>
  <svg class="a" style="left:128.5px;top:538.7px;opacity:0.75" width="163" height="38" viewBox="0 0 163 38"><path d="M39.0 7.5 L40.6 7.3 L42.5 6.9 L44.8 6.5 L47.4 6.0 L50.2 5.5 L53.2 5.0 L56.3 4.6 L59.4 4.3 L62.6 4.1 L65.8 4.0 L69.1 4.1 L72.6 4.2 L76.2 4.5 L79.9 4.8 L83.7 5.2 L87.4 5.6 L91.2 6.0 L94.8 6.4 L98.3 6.8 L101.7 7.2 L105.0 7.6 L108.3 8.0 L111.6 8.4 L114.9 8.8 L118.0 9.3 L121.1 9.7 L124.0 10.1 L126.8 10.5 L129.4 10.9 L131.8 11.3 L134.2 11.6 L136.5 12.0 L138.6 12.4 L140.6 12.7 L142.5 13.0 L144.2 13.3 L145.7 13.6 L147.0 13.8 L148.0 14.0 A3.0 3.0 0 0 1 148.0 20.0 L148.0 20.0 L147.0 20.2 L145.7 20.5 L144.2 20.9 L142.5 21.3 L140.6 21.7 L138.6 22.1 L136.5 22.4 L134.2 22.7 L131.8 22.9 L129.4 23.0 L126.8 23.0 L124.0 22.9 L121.1 22.7 L118.0 22.5 L114.9 22.3 L111.6 22.0 L108.3 21.7 L105.0 21.4 L101.7 21.1 L98.3 20.9 L94.8 20.6 L91.2 20.3 L87.4 20.0 L83.7 19.7 L79.9 19.4 L76.2 19.1 L72.6 18.7 L69.1 18.4 L65.8 18.1 L62.6 17.7 L59.4 17.4 L56.3 16.9 L53.2 16.5 L50.2 16.1 L47.4 15.7 L44.8 15.3 L42.5 15.0 L40.6 14.7 L39.0 14.5 A3.5 3.5 0 0 1 39.0 7.5 Z" fill="#fff" filter="url(#ch8)"/></svg>
  <div class="a" style="left:135.5px;top:545.7px;width:12.5px;height:12.5px;border-radius:50%;background:radial-gradient(circle,#484848 0%,#404040 45%,#363636 65%,rgba(54,54,54,0) 72%)"></div>
  <div class="t bt" style="left:137.5px;top:567.7px">64</div>
  <div class="t bt" style="left:160px;top:567.7px">Dense Grain Chalk</div>
  <div class="a" style="left:128.5px;top:578.7px;width:163px;height:38.5px;background:#2a2a2a"></div>
  <svg class="a" style="left:128.5px;top:578.7px;opacity:0.28" width="163" height="38" viewBox="0 0 163 38"><path d="M32.0 10.5 L33.7 10.3 L35.7 10.0 L38.1 9.6 L40.8 9.2 L43.8 8.7 L46.9 8.2 L50.1 7.8 L53.5 7.3 L56.9 6.9 L60.3 6.6 L63.7 6.3 L66.9 6.1 L70.0 6.0 L73.0 6.0 L76.0 6.2 L79.0 6.4 L81.9 6.7 L84.9 7.0 L87.9 7.4 L91.0 7.8 L94.0 8.3 L97.1 8.7 L100.3 9.1 L103.4 9.4 L106.7 9.8 L110.0 10.0 L113.5 10.2 L117.3 10.4 L121.3 10.5 L125.5 10.7 L129.7 10.8 L133.9 10.9 L138.1 11.1 L142.0 11.1 L145.8 11.2 L149.2 11.3 L152.3 11.4 L154.9 11.4 L157.0 11.5 A3.5 3.5 0 0 1 157.0 18.5 L157.0 18.5 L154.9 18.7 L152.3 18.9 L149.2 19.2 L145.8 19.6 L142.0 19.9 L138.1 20.3 L133.9 20.7 L129.7 21.0 L125.5 21.4 L121.3 21.6 L117.3 21.8 L113.5 22.0 L110.0 22.0 L106.7 21.9 L103.4 21.8 L100.3 21.5 L97.1 21.2 L94.0 20.8 L91.0 20.5 L87.9 20.0 L84.9 19.6 L81.9 19.2 L79.0 18.8 L76.0 18.5 L73.0 18.2 L70.0 18.0 L66.9 17.8 L63.7 17.7 L60.3 17.6 L56.9 17.6 L53.5 17.5 L50.1 17.5 L46.9 17.5 L43.8 17.5 L40.8 17.5 L38.1 17.5 L35.7 17.5 L33.7 17.5 L32.0 17.5 A3.5 3.5 0 0 1 32.0 10.5 Z" fill="#fff" filter="url(#soft)"/></svg>
  <div class="t bt" style="left:137.5px;top:607.7px">128</div>
  <div class="t bt" style="left:160px;top:607.7px">Chalkboard Tool</div>
  <div class="a" style="left:128.5px;top:618.7px;width:163px;height:38.5px;background:#2a2a2a"></div>
  <div class="t bt" style="left:137.5px;top:647.7px">64</div>
  <div class="t bt" style="left:160px;top:647.7px">Charcoal Pencil</div>
  <div class="a" style="left:128.5px;top:658.7px;width:163px;height:38.5px;background:#2a2a2a"></div>
  <svg class="a" style="left:128.5px;top:658.7px;opacity:0.8" width="163" height="38" viewBox="0 0 163 38"><path d="M60.0 12.5 L61.3 12.3 L63.0 12.1 L64.9 11.8 L67.0 11.5 L69.4 11.2 L71.8 10.8 L74.4 10.4 L77.1 10.1 L79.8 9.8 L82.5 9.5 L85.1 9.3 L87.6 9.1 L90.0 9.0 L92.3 9.0 L94.7 9.0 L97.1 9.0 L99.5 9.1 L101.9 9.3 L104.3 9.4 L106.7 9.6 L109.0 9.8 L111.4 10.1 L113.6 10.3 L115.8 10.5 L118.0 10.8 L120.0 11.0 L122.0 11.3 L124.0 11.5 L126.1 11.9 L128.1 12.2 L130.0 12.6 L132.0 12.9 L133.8 13.3 L135.5 13.7 L137.1 14.0 L138.6 14.3 L139.9 14.6 L141.1 14.8 L142.0 15.0 A3.0 3.0 0 0 1 142.0 21.0 L142.0 21.0 L141.1 21.1 L139.9 21.3 L138.6 21.4 L137.1 21.7 L135.5 21.9 L133.8 22.1 L132.0 22.4 L130.0 22.6 L128.1 22.8 L126.1 22.9 L124.0 23.0 L122.0 23.0 L120.0 23.0 L118.0 22.9 L115.8 22.7 L113.6 22.4 L111.4 22.1 L109.0 21.7 L106.7 21.3 L104.3 20.9 L101.9 20.5 L99.5 20.1 L97.1 19.7 L94.7 19.4 L92.3 19.2 L90.0 19.0 L87.6 18.9 L85.1 18.8 L82.5 18.8 L79.8 18.8 L77.1 18.9 L74.4 19.0 L71.8 19.0 L69.4 19.1 L67.0 19.2 L64.9 19.3 L63.0 19.4 L61.3 19.5 L60.0 19.5 A3.5 3.5 0 0 1 60.0 12.5 Z" fill="#fff" filter="url(#ch11)"/></svg>
  <div class="t bt" style="left:137.5px;top:687.7px">64</div>
  <div class="t bt" style="left:160px;top:687.7px">Pastel</div>
  <div class="a" style="left:128.5px;top:698.7px;width:163px;height:38.5px;background:#2a2a2a"></div>
  <svg class="a" style="left:128.5px;top:698.7px;opacity:0.9" width="163" height="38" viewBox="0 0 163 38"><path d="M60.0 14.5 L61.3 14.5 L62.9 14.4 L64.8 14.3 L66.9 14.2 L69.1 14.1 L71.6 14.0 L74.1 13.9 L76.7 13.8 L79.4 13.7 L82.1 13.6 L84.8 13.6 L87.4 13.5 L90.0 13.5 L92.6 13.5 L95.3 13.5 L98.0 13.6 L100.9 13.6 L103.8 13.7 L106.7 13.8 L109.6 13.9 L112.4 14.0 L115.2 14.1 L117.8 14.2 L120.4 14.3 L122.8 14.4 L125.0 14.5 L127.1 14.6 L129.1 14.7 L131.0 14.8 L132.9 15.0 L134.7 15.1 L136.4 15.2 L138.0 15.4 L139.4 15.5 L140.8 15.6 L142.1 15.7 L143.2 15.8 L144.2 15.9 L145.0 16.0 A2.0 2.0 0 0 1 145.0 20.0 L145.0 20.0 L144.2 20.1 L143.2 20.2 L142.1 20.3 L140.8 20.4 L139.4 20.6 L138.0 20.7 L136.4 20.9 L134.7 21.0 L132.9 21.2 L131.0 21.3 L129.1 21.4 L127.1 21.5 L125.0 21.5 L122.8 21.5 L120.4 21.5 L117.8 21.4 L115.2 21.4 L112.4 21.3 L109.6 21.2 L106.7 21.1 L103.8 21.0 L100.9 20.9 L98.0 20.8 L95.3 20.7 L92.6 20.6 L90.0 20.5 L87.4 20.4 L84.8 20.3 L82.1 20.2 L79.4 20.2 L76.7 20.1 L74.1 20.0 L71.6 19.9 L69.1 19.8 L66.9 19.7 L64.8 19.7 L62.9 19.6 L61.3 19.5 L60.0 19.5 A2.5 2.5 0 0 1 60.0 14.5 Z" fill="#fff" filter="url(#ch12)"/></svg>
  <div class="t bt" style="left:137.5px;top:727.7px">64</div>
  <div class="t bt" style="left:160px;top:727.7px">Conte</div>
  <div class="a" style="left:128.5px;top:738.7px;width:163px;height:38.5px;background:#2a2a2a"></div>
  <svg class="a" style="left:128.5px;top:738.7px;opacity:0.75" width="163" height="38" viewBox="0 0 163 38"><path d="M60.0 11.5 L61.8 11.3 L64.1 11.1 L66.7 10.8 L69.7 10.5 L72.9 10.1 L76.4 9.7 L79.9 9.4 L83.5 9.0 L87.1 8.7 L90.6 8.4 L94.0 8.2 L97.1 8.1 L100.0 8.0 L102.7 8.0 L105.3 8.1 L108.0 8.3 L110.6 8.5 L113.1 8.7 L115.5 9.0 L117.9 9.3 L120.2 9.6 L122.4 9.9 L124.5 10.2 L126.5 10.5 L128.3 10.8 L130.0 11.0 L131.5 11.2 L133.0 11.4 L134.2 11.7 L135.4 11.9 L136.5 12.1 L137.4 12.3 L138.3 12.5 L139.1 12.7 L139.8 12.9 L140.4 13.1 L141.0 13.3 L141.5 13.4 L142.0 13.5 A3.5 3.5 0 0 1 142.0 20.5 L142.0 20.5 L141.5 20.6 L141.0 20.8 L140.4 21.0 L139.8 21.2 L139.1 21.4 L138.3 21.7 L137.4 21.9 L136.5 22.2 L135.4 22.4 L134.2 22.6 L133.0 22.8 L131.5 22.9 L130.0 23.0 L128.3 23.0 L126.5 23.0 L124.5 23.0 L122.4 23.0 L120.2 22.9 L117.9 22.8 L115.5 22.7 L113.1 22.6 L110.6 22.5 L108.0 22.3 L105.3 22.2 L102.7 22.1 L100.0 22.0 L97.1 21.9 L94.0 21.8 L90.6 21.7 L87.1 21.5 L83.5 21.4 L79.9 21.3 L76.4 21.1 L72.9 21.0 L69.7 20.9 L66.7 20.8 L64.1 20.7 L61.8 20.6 L60.0 20.5 A4.5 4.5 0 0 1 60.0 11.5 Z" fill="#fff" filter="url(#ch13)"/></svg>
  <div class="t bt" style="left:137.5px;top:767.7px">64</div>
  <div class="t bt" style="left:160px;top:767.7px">Sketch</div>
  <div class="a" style="left:296.5px;top:220px;width:3.5px;height:527px;border-radius:2px;background:#454545"></div>
  <div class="a" style="left:300px;top:158px;width:4px;height:643px;background:#1c1c1c"></div>
  <!-- canvas -->
  <div class="a" style="left:303px;top:158px;width:895px;height:643px;background:#232323"></div>
  <div class="a" style="left:303px;top:158px;width:895px;height:15px;background:#252525"></div>
  <div class="a" style="left:304px;top:200px;width:764px;height:575px;background:#f5ecd9"></div>
  <!-- PAGE CONTENT -->
  <div class="a" style="left:303px;top:158.5px;width:175px;height:14px;background:#222"></div>
  <div class="a" style="left:479px;top:158.5px;width:175px;height:14px;background:#262626"></div>
  <div class="t" style="left:479px;width:176px;text-align:center;top:163.5px;font-size:6.5px;color:#6a6a6a">Lake [M]</div>
  <div class="a" style="left:655px;top:158.5px;width:175px;height:14px;background:#262626"></div>
  <div class="t" style="left:655px;width:176px;text-align:center;top:163.5px;font-size:6.5px;color:#6a6a6a">Creative Events</div>
  <div class="a" style="left:831px;top:158.5px;width:175px;height:14px;background:#313131"></div>
  <div class="t" style="left:831px;width:176px;text-align:center;top:163.5px;font-size:6.5px;color:#d8d8d8">De Pointe [M]</div>
  <div class="a" style="left:1007px;top:158.5px;width:175px;height:14px;background:#262626"></div>
  <div class="t" style="left:1007px;width:176px;text-align:center;top:163.5px;font-size:6.5px;color:#6a6a6a">Dancer</div>
  <div class="a" style="left:1183px;top:158.5px;width:6px;height:14px;background:#232323"></div>
  <div class="a" style="left:1189px;top:158.5px;width:9px;height:634px;background:#272727;border-left:1px solid #202020"></div>
  <div class="a" style="left:303px;top:792.5px;width:895px;height:8.5px;background:#272727;border-top:1px solid #202020"></div>
  <div class="t" style="left:304px;top:234.8px;font-size:6.1px;font-weight:bold;color:#221d18">DE POINTE</div>
  <div class="t" style="left:547.5px;top:235.9px;font-size:5.95px;font-weight:bold;color:#221d18">SPRING/SUMMER CATALOGUE</div>
  <div class="t" style="left:790px;top:234.8px;font-size:6.15px;font-weight:bold;color:#221d18">www.depointe.cc</div>
  <div class="t" style="left:303px;top:279.7px;font-size:42.5px;font-family:'Liberation Serif',serif;font-weight:bold;color:#0e0b1c;-webkit-text-stroke:0.7px #0e0b1c;transform:scaleX(0.98);transform-origin:0 0">S/S</div>
  <div class="t" style="left:303px;top:320.7px;font-size:42.5px;font-family:'Liberation Serif',serif;font-weight:bold;color:#0e0b1c;-webkit-text-stroke:0.9px #0e0b1c;transform:scaleX(0.813);transform-origin:0 0">COLLECTION</div>
  <div class="t" style="left:304px;top:371.1px;font-size:20.5px;color:#3a3530;transform:scale(1.01,1.13);transform-origin:0 0;opacity:.72">SHOP THE</div>
  <div class="t" style="left:304px;top:393.2px;font-size:20.5px;color:#3a3530;transform:scale(1.01,1.13);transform-origin:0 0;opacity:.72">RANGE</div>
  <div class="t" style="left:302.5px;top:428.0px;font-size:6.9px;color:#948c7e">Feel fresh with our revitalising spring/summer</div>
  <div class="t" style="left:302.5px;top:438.2px;font-size:6.9px;color:#948c7e">collection. Featuring jersey tops, bib shorts, t-shirts</div>
  <div class="t" style="left:302.5px;top:448.5px;font-size:6.9px;color:#948c7e">and other products in muted tones like buttermilk</div>
  <div class="t" style="left:302.5px;top:458.7px;font-size:6.9px;color:#948c7e">yellow, baby blue and pale grey, the new range is</div>
  <div class="t" style="left:302.5px;top:468.9px;font-size:6.9px;color:#948c7e">both fashionable and expertly designed to keep you</div>
  <div class="t" style="left:302.5px;top:479.1px;font-size:6.9px;color:#948c7e">cool and comfortable on your rides. Available in all</div>
  <div class="t" style="left:302.5px;top:489.3px;font-size:6.9px;color:#948c7e">sizes. Bidon designed to fit perfectly in your bike's</div>
  <div class="t" style="left:302.5px;top:499.6px;font-size:6.9px;color:#948c7e">cupholder or jersey pocket.</div>
  <div class="t" style="left:304px;top:542.1px;font-size:8.4px;font-weight:bold;color:#1a1614">Sizing Chart</div>
  <div class="a" style="left:304px;top:563px;width:214px;height:22.5px;background:#d7c89a"></div>
  <div class="a" style="left:304px;top:585.5px;width:214px;height:68px;background:#f2e9d6"></div>
  <div class="a" style="left:304px;top:562.5px;width:214px;height:1px;background:#6d6244"></div>
  <div class="a" style="left:304px;top:574.1px;width:214px;height:1px;background:#6d6244"></div>
  <div class="a" style="left:304px;top:585.0px;width:214px;height:1px;background:#6d6244"></div>
  <div class="a" style="left:304px;top:594.9px;width:214px;height:1px;background:#6d6244"></div>
  <div class="a" style="left:304px;top:604.3px;width:214px;height:1px;background:#6d6244"></div>
  <div class="a" style="left:304px;top:614.0px;width:214px;height:1px;background:#6d6244"></div>
  <div class="a" style="left:304px;top:623.8px;width:214px;height:1px;background:#6d6244"></div>
  <div class="a" style="left:304px;top:633.2px;width:214px;height:1px;background:#6d6244"></div>
  <div class="a" style="left:304px;top:643.2px;width:214px;height:1px;background:#6d6244"></div>
  <div class="a" style="left:304px;top:652.8px;width:214px;height:1px;background:#6d6244"></div>
  <div class="a" style="left:303.5px;top:563px;width:1px;height:90.5px;background:#6d6244"></div>
  <div class="a" style="left:357.0px;top:563px;width:1px;height:90.5px;background:#6d6244"></div>
  <div class="a" style="left:411.0px;top:563px;width:1px;height:90.5px;background:#6d6244"></div>
  <div class="a" style="left:464.5px;top:563px;width:1px;height:90.5px;background:#6d6244"></div>
  <div class="a" style="left:517.5px;top:563px;width:1px;height:90.5px;background:#6d6244"></div>
  <div class="t" style="left:304px;width:53.5px;text-align:center;top:565.7px;font-size:6px;color:#8a7848">SIZE</div>
  <div class="t" style="left:357.5px;width:54.0px;text-align:center;top:565.7px;font-size:6px;color:#8a7848">CHEST WIDTH</div>
  <div class="t" style="left:411.5px;width:53.5px;text-align:center;top:565.7px;font-size:6px;color:#8a7848">CHEST SIZE</div>
  <div class="t" style="left:465px;width:53px;text-align:center;top:565.7px;font-size:6px;color:#8a7848">TO FIT SIZE</div>
  <div class="t" style="left:357.5px;width:54.0px;text-align:center;top:576.9px;font-size:6px;color:#8a7848">CM&nbsp;&nbsp;INCH</div>
  <div class="t" style="left:411.5px;width:53.5px;text-align:center;top:576.9px;font-size:6px;color:#8a7848">CM&nbsp;&nbsp;INCH</div>
  <div class="t" style="left:465px;width:53px;text-align:center;top:576.9px;font-size:6px;color:#8a7848">INCH</div>
  <div class="t" style="left:304px;width:53.5px;text-align:center;top:587.4px;font-size:6px;color:#5e5545">XXS</div>
  <div class="t" style="left:357.5px;width:54.0px;text-align:center;top:587.4px;font-size:6px;color:#5e5545">45&nbsp;&nbsp;&nbsp;16</div>
  <div class="t" style="left:411.5px;width:53.5px;text-align:center;top:587.4px;font-size:6px;color:#5e5545">96&nbsp;&nbsp;&nbsp;35</div>
  <div class="t" style="left:465px;width:53px;text-align:center;top:587.4px;font-size:6px;color:#5e5545">29-32"</div>
  <div class="t" style="left:304px;width:53.5px;text-align:center;top:597.0px;font-size:6px;color:#5e5545">XS</div>
  <div class="t" style="left:357.5px;width:54.0px;text-align:center;top:597.0px;font-size:6px;color:#5e5545">48&nbsp;&nbsp;&nbsp;19</div>
  <div class="t" style="left:411.5px;width:53.5px;text-align:center;top:597.0px;font-size:6px;color:#5e5545">96&nbsp;&nbsp;&nbsp;38</div>
  <div class="t" style="left:465px;width:53px;text-align:center;top:597.0px;font-size:6px;color:#5e5545">33-35"</div>
  <div class="t" style="left:304px;width:53.5px;text-align:center;top:606.5px;font-size:6px;color:#5e5545">S</div>
  <div class="t" style="left:357.5px;width:54.0px;text-align:center;top:606.5px;font-size:6px;color:#5e5545">51&nbsp;&nbsp;&nbsp;22</div>
  <div class="t" style="left:411.5px;width:53.5px;text-align:center;top:606.5px;font-size:6px;color:#5e5545">99&nbsp;&nbsp;&nbsp;41</div>
  <div class="t" style="left:465px;width:53px;text-align:center;top:606.5px;font-size:6px;color:#5e5545">38-41"</div>
  <div class="t" style="left:304px;width:53.5px;text-align:center;top:616.3px;font-size:6px;color:#5e5545">M</div>
  <div class="t" style="left:357.5px;width:54.0px;text-align:center;top:616.3px;font-size:6px;color:#5e5545">54&nbsp;&nbsp;&nbsp;25</div>
  <div class="t" style="left:411.5px;width:53.5px;text-align:center;top:616.3px;font-size:6px;color:#5e5545">102&nbsp;&nbsp;&nbsp;44</div>
  <div class="t" style="left:465px;width:53px;text-align:center;top:616.3px;font-size:6px;color:#5e5545">44-47"</div>
  <div class="t" style="left:304px;width:53.5px;text-align:center;top:625.9px;font-size:6px;color:#5e5545">L</div>
  <div class="t" style="left:357.5px;width:54.0px;text-align:center;top:625.9px;font-size:6px;color:#5e5545">57&nbsp;&nbsp;&nbsp;28</div>
  <div class="t" style="left:411.5px;width:53.5px;text-align:center;top:625.9px;font-size:6px;color:#5e5545">105&nbsp;&nbsp;&nbsp;47</div>
  <div class="t" style="left:465px;width:53px;text-align:center;top:625.9px;font-size:6px;color:#5e5545">50-53"</div>
  <div class="t" style="left:304px;width:53.5px;text-align:center;top:635.6px;font-size:6px;color:#5e5545">XL</div>
  <div class="t" style="left:357.5px;width:54.0px;text-align:center;top:635.6px;font-size:6px;color:#5e5545">60&nbsp;&nbsp;&nbsp;31</div>
  <div class="t" style="left:411.5px;width:53.5px;text-align:center;top:635.6px;font-size:6px;color:#5e5545">108&nbsp;&nbsp;&nbsp;50</div>
  <div class="t" style="left:465px;width:53px;text-align:center;top:635.6px;font-size:6px;color:#5e5545">56-59"</div>
  <div class="t" style="left:304px;width:53.5px;text-align:center;top:645.4px;font-size:6px;color:#5e5545">XXL</div>
  <div class="t" style="left:357.5px;width:54.0px;text-align:center;top:645.4px;font-size:6px;color:#5e5545">63&nbsp;&nbsp;&nbsp;34</div>
  <div class="t" style="left:411.5px;width:53.5px;text-align:center;top:645.4px;font-size:6px;color:#5e5545">111&nbsp;&nbsp;&nbsp;53</div>
  <div class="t" style="left:465px;width:53px;text-align:center;top:645.4px;font-size:6px;color:#5e5545">62-65"</div>
  <!-- PRODUCTS -->
  <svg class="a" style="left:576.3px;top:373.3px;filter:drop-shadow(0 0 1.5px rgba(180,160,120,.35))" width="89" height="90" viewBox="0 0 89 90"><rect x="0" y="0" width="89" height="90" rx="8.5" fill="#fefdfa"/><path d="M38 15 C41 17 48 17 51 15 L58 16.5 C64 18 69 19.5 71 23 C72 30 72 37 72.5 44 C69 45 65.5 45.5 62 44.5 L62.5 78.5 C54 79.5 35 79.5 26.5 78.5 L27 44.5 C23.5 45.5 20 45 16.5 44 C17 37 17 30 18 23 C20 19.5 25 18 31 16.5 Z" fill="#e9eadd"/><path d="M38 15 C38 11.5 51 11.5 51 15 C48 17.5 41 17.5 38 15Z" fill="#f4f4ee"/><path d="M27 44.5 C26 38 27 30 28 26 M62 44.5 C63 38 62 30 61 26" stroke="#000" stroke-opacity=".07" stroke-width="1.5" fill="none"/></svg>
  <svg class="a" style="left:673.8px;top:373.3px;filter:drop-shadow(0 0 1.5px rgba(180,160,120,.35))" width="89" height="90" viewBox="0 0 89 90"><rect x="0" y="0" width="89" height="90" rx="8.5" fill="#fefdfa"/><path d="M38 15 C41 17 48 17 51 15 L58 16.5 C64 18 69 19.5 71 23 C72 30 72 37 72.5 44 C69 45 65.5 45.5 62 44.5 L62.5 78.5 C54 79.5 35 79.5 26.5 78.5 L27 44.5 C23.5 45.5 20 45 16.5 44 C17 37 17 30 18 23 C20 19.5 25 18 31 16.5 Z" fill="#b9b9b9"/><path d="M38 15 C38 11.5 51 11.5 51 15 C48 17.5 41 17.5 38 15Z" fill="#e6e6e6"/><path d="M27 44.5 C26 38 27 30 28 26 M62 44.5 C63 38 62 30 61 26" stroke="#000" stroke-opacity=".07" stroke-width="1.5" fill="none"/><path d="M44.5 16 V77" stroke="#d9d9d9" stroke-width="0.8"/></svg>
  <svg class="a" style="left:770.6px;top:373.3px;filter:drop-shadow(0 0 1.5px rgba(180,160,120,.35))" width="89" height="90" viewBox="0 0 89 90"><rect x="0" y="0" width="89" height="90" rx="8.5" fill="#fefdfa"/><path d="M38 15 C41 17 48 17 51 15 L58 16.5 C64 18 69 19.5 71 23 C72 30 72 37 72.5 44 C69 45 65.5 45.5 62 44.5 L62.5 78.5 C54 79.5 35 79.5 26.5 78.5 L27 44.5 C23.5 45.5 20 45 16.5 44 C17 37 17 30 18 23 C20 19.5 25 18 31 16.5 Z" fill="#e7eaee"/><path d="M38 15 C38 11.5 51 11.5 51 15 C48 17.5 41 17.5 38 15Z" fill="#f3f4f6"/><path d="M27 44.5 C26 38 27 30 28 26 M62 44.5 C63 38 62 30 61 26" stroke="#000" stroke-opacity=".07" stroke-width="1.5" fill="none"/></svg>
  <svg class="a" style="left:576.3px;top:470.1px;filter:drop-shadow(0 0 1.5px rgba(180,160,120,.35))" width="89" height="90" viewBox="0 0 89 90"><rect x="0" y="0" width="89" height="90" rx="8.5" fill="#fefdfa"/><path d="M42 8 H47 V13 H42 Z" fill="#1a1a1a"/><path d="M35 15 C35 13 38 12.5 44.5 12.5 C51 12.5 54 13 54 15 L55 21 C55 22.5 53 23 44.5 23 C36 23 34 22.5 34 21 Z" fill="#1e1e1e"/><path d="M33 23 H56 C57 28 57.5 33 56.5 38 C56 41 57 44 57.5 48 L57.5 80 C57.5 82 55 83 44.5 83 C34 83 31.5 82 31.5 80 L31.5 48 C32 44 33 41 32.5 38 C31.5 33 32 28 33 23 Z" fill="#e7dcc2"/><rect x="31.5" y="50" width="26" height="14" fill="#f9f9f5"/><text x="44.5" y="59" text-anchor="middle" font-family="Liberation Sans" font-weight="bold" font-style="italic" font-size="5" transform="rotate(-3 44.5 59)" fill="#1a1a1a">de pointe</text></svg>
  <svg class="a" style="left:673.8px;top:470.1px;filter:drop-shadow(0 0 1.5px rgba(180,160,120,.35))" width="89" height="90" viewBox="0 0 89 90"><rect x="0" y="0" width="89" height="90" rx="8.5" fill="#fefdfa"/><path d="M42 8 H47 V13 H42 Z" fill="#1a1a1a"/><path d="M35 15 C35 13 38 12.5 44.5 12.5 C51 12.5 54 13 54 15 L55 21 C55 22.5 53 23 44.5 23 C36 23 34 22.5 34 21 Z" fill="#1e1e1e"/><path d="M33 23 H56 C57 28 57.5 33 56.5 38 C56 41 57 44 57.5 48 L57.5 80 C57.5 82 55 83 44.5 83 C34 83 31.5 82 31.5 80 L31.5 48 C32 44 33 41 32.5 38 C31.5 33 32 28 33 23 Z" fill="#f4f4f4"/><ellipse cx="35.5" cy="27.6" rx="2.9" ry="2.3" transform="rotate(24 35.5 27)" fill="#0e0e22"/><ellipse cx="41.7" cy="26.9" rx="2.9" ry="2.3" transform="rotate(24 41.7 27)" fill="#0e0e22"/><ellipse cx="47.9" cy="27.5" rx="2.9" ry="2.3" transform="rotate(0 47.9 27)" fill="#14143a"/><ellipse cx="54.1" cy="26.4" rx="2.9" ry="2.3" transform="rotate(-11 54.1 27)" fill="#14143a"/><ellipse cx="55.6" cy="28.8" rx="1.3" ry="1" fill="#8a8a2a"/><ellipse cx="38.6" cy="33.5" rx="2.9" ry="2.3" transform="rotate(14 38.6 33)" fill="#3a5ab0"/><ellipse cx="44.8" cy="33.8" rx="2.9" ry="2.3" transform="rotate(-2 44.8 33)" fill="#3a5ab0"/><ellipse cx="51.0" cy="33.2" rx="2.9" ry="2.3" transform="rotate(9 51.0 33)" fill="#3a5ab0"/><ellipse cx="52.5" cy="34.8" rx="1.3" ry="1" fill="#8a8a2a"/><ellipse cx="35.5" cy="38.3" rx="2.9" ry="2.3" transform="rotate(-28 35.5 39)" fill="#3a5ab0"/><ellipse cx="37.0" cy="40.8" rx="1.3" ry="1" fill="#8a8a2a"/><ellipse cx="41.7" cy="39.2" rx="2.9" ry="2.3" transform="rotate(19 41.7 39)" fill="#14143a"/><ellipse cx="43.2" cy="40.8" rx="1.3" ry="1" fill="#8a8a2a"/><ellipse cx="47.9" cy="39.1" rx="2.9" ry="2.3" transform="rotate(-18 47.9 39)" fill="#0e0e22"/><ellipse cx="54.1" cy="39.0" rx="2.9" ry="2.3" transform="rotate(12 54.1 39)" fill="#2f4fa8"/><ellipse cx="55.6" cy="40.8" rx="1.3" ry="1" fill="#8a8a2a"/><ellipse cx="38.6" cy="44.9" rx="2.9" ry="2.3" transform="rotate(5 38.6 45)" fill="#2f4fa8"/><ellipse cx="44.8" cy="45.3" rx="2.9" ry="2.3" transform="rotate(-10 44.8 45)" fill="#1e2a70"/><ellipse cx="51.0" cy="44.7" rx="2.9" ry="2.3" transform="rotate(-26 51.0 45)" fill="#3a5ab0"/><path d="M31.5 64 H57.5 V80 C57.5 82 55 83 44.5 83 C34 83 31.5 82 31.5 80 Z" fill="#8a7a1e"/><rect x="31.5" y="50" width="26" height="14" fill="#f9f9f5"/><text x="44.5" y="59" text-anchor="middle" font-family="Liberation Sans" font-weight="bold" font-style="italic" font-size="5" transform="rotate(-3 44.5 59)" fill="#1a1a1a">de pointe</text></svg>
  <svg class="a" style="left:770.6px;top:470.1px;filter:drop-shadow(0 0 1.5px rgba(180,160,120,.35))" width="89" height="90" viewBox="0 0 89 90"><rect x="0" y="0" width="89" height="90" rx="8.5" fill="#fefdfa"/><path d="M42 8 H47 V13 H42 Z" fill="#1a1a1a"/><path d="M35 15 C35 13 38 12.5 44.5 12.5 C51 12.5 54 13 54 15 L55 21 C55 22.5 53 23 44.5 23 C36 23 34 22.5 34 21 Z" fill="#1e1e1e"/><path d="M33 23 H56 C57 28 57.5 33 56.5 38 C56 41 57 44 57.5 48 L57.5 80 C57.5 82 55 83 44.5 83 C34 83 31.5 82 31.5 80 L31.5 48 C32 44 33 41 32.5 38 C31.5 33 32 28 33 23 Z" fill="#c6d3e2"/><rect x="31.5" y="50" width="26" height="14" fill="#f9f9f5"/><text x="44.5" y="59" text-anchor="middle" font-family="Liberation Sans" font-weight="bold" font-style="italic" font-size="5" transform="rotate(-3 44.5 59)" fill="#1a1a1a">de pointe</text></svg>
  <svg class="a" style="left:576.3px;top:568.2px;filter:drop-shadow(0 0 1.5px rgba(180,160,120,.35))" width="89" height="90" viewBox="0 0 89 90"><rect x="0" y="0" width="89" height="90" rx="8.5" fill="#fefdfa"/><path d="M36 13 C40 16 49 16 53 13 L63 16 C68 18 72 22 73 27 L73 36 C69 37 65 37 61 36.5 L61 80 C52 81 35 81 26 80 L26 36.5 C22 37 18 37 13 36 L14 27 C15 22 19 18 24 16 Z" fill="#161616"/><text x="43.5" y="29" text-anchor="middle" font-family="Liberation Sans" font-weight="bold" font-style="italic" font-size="6.2" transform="rotate(-4 43.5 29)" fill="#f2f2f2">de pointe</text></svg>
  <svg class="a" style="left:673.8px;top:568.2px;filter:drop-shadow(0 0 1.5px rgba(180,160,120,.35))" width="89" height="90" viewBox="0 0 89 90"><rect x="0" y="0" width="89" height="90" rx="8.5" fill="#fefdfa"/><path d="M36 13 C40 16 49 16 53 13 L63 16 C68 18 72 22 73 27 L73 36 C69 37 65 37 61 36.5 L61 80 C52 81 35 81 26 80 L26 36.5 C22 37 18 37 13 36 L14 27 C15 22 19 18 24 16 Z" fill="#161616"/><text x="43.5" y="29" text-anchor="middle" font-family="Liberation Sans" font-weight="bold" font-style="italic" font-size="6.2" transform="rotate(-4 43.5 29)" fill="#bdbdbd">de pointe</text></svg>
  <svg class="a" style="left:770.6px;top:568.2px;filter:drop-shadow(0 0 1.5px rgba(180,160,120,.35))" width="89" height="90" viewBox="0 0 89 90"><rect x="0" y="0" width="89" height="90" rx="8.5" fill="#fefdfa"/><path d="M36 13 C40 16 49 16 53 13 L63 16 C68 18 72 22 73 27 L73 36 C69 37 65 37 61 36.5 L61 80 C52 81 35 81 26 80 L26 36.5 C22 37 18 37 13 36 L14 27 C15 22 19 18 24 16 Z" fill="#161616"/><text x="43.5" y="29" text-anchor="middle" font-family="Liberation Sans" font-weight="bold" font-style="italic" font-size="6.2" transform="rotate(-4 43.5 29)" fill="#d8d8d8">de pointe</text></svg>
  <div class="t" style="left:885.3px;top:382.4px;font-size:7px;font-weight:bold;color:#1e1a17">Team Jersey</div>
  <div class="t" style="left:885.3px;top:399.5px;font-size:4.9px;color:#938c80">Made from a blend of</div>
  <div class="t" style="left:885.3px;top:407.0px;font-size:4.9px;color:#938c80">polyester and Lycra, this</div>
  <div class="t" style="left:885.3px;top:414.5px;font-size:4.9px;color:#938c80">super breathable, lightweight</div>
  <div class="t" style="left:885.3px;top:422.0px;font-size:4.9px;color:#938c80">jersey is ideal for spring</div>
  <div class="t" style="left:885px;top:439.0px;font-size:9.2px;color:#4a443c"><span style="font-size:5.5px">€</span>112<span style="font-size:6px">00</span></div>
  <div class="t" style="left:885.3px;top:478.8px;font-size:7px;font-weight:bold;color:#1e1a17">Logo Bidon</div>
  <div class="t" style="left:885.3px;top:494.5px;font-size:4.9px;color:#938c80">Drinks bottle with ergonomic</div>
  <div class="t" style="left:885.3px;top:502.0px;font-size:4.9px;color:#938c80">cap with capacity of 500ml</div>
  <div class="t" style="left:885.3px;top:509.5px;font-size:4.9px;color:#938c80">Available in metal and BPA</div>
  <div class="t" style="left:885.3px;top:517.0px;font-size:4.9px;color:#938c80">free plastic for flexibility</div>
  <div class="t" style="left:885px;top:535.0px;font-size:9.2px;color:#4a443c"><span style="font-size:5.5px">€</span>11<span style="font-size:6px">00</span></div>
  <div class="t" style="left:885.3px;top:577.4px;font-size:7px;font-weight:bold;color:#1e1a17">Crew T-Shirt</div>
  <div class="t" style="left:885.3px;top:594.9px;font-size:4.9px;color:#938c80">Made from 100% organic</div>
  <div class="t" style="left:885.3px;top:602.4px;font-size:4.9px;color:#938c80">cotton, this soft-to-the-touch</div>
  <div class="t" style="left:885.3px;top:609.9px;font-size:4.9px;color:#938c80">crew neck T-shirt is perfect for</div>
  <div class="t" style="left:885.3px;top:617.4px;font-size:4.9px;color:#938c80">on and off the bike.</div>
  <div class="t" style="left:885px;top:633.0px;font-size:9.2px;color:#4a443c"><span style="font-size:5.5px">€</span>30<span style="font-size:6px">00</span></div>
  <div class="a" style="left:300px;top:176px;width:4px;height:625px;background:#1d1d1d"></div>
  <!-- right panel -->
  <div class="a" style="left:1198px;top:158px;width:177px;height:643px;background:#2a2a2a;border-left:1px solid #1a1a1a"></div>
  <!-- RIGHT PANEL CONTENT -->
  <div class="a" style="left:1199px;top:158px;width:176px;height:18.5px;background:#1d1d1d"></div>
  <div class="a" style="left:1205px;top:162.5px;width:2px;height:9.5px;background:#3a3a3a;border-radius:1px"></div>
  <div class="a" style="left:1211px;top:161.1px;width:40.8px;height:12.4px;border-radius:3px;background:#333"></div>
  <div class="t" style="left:1214.7px;top:164.9px;font-size:7.1px;color:#e8e8e8">Histogram</div>
  <div class="t" style="left:1256px;top:164.9px;font-size:7.1px;color:#9a9a9a">Colour</div>
  <div class="a" style="left:1358px;top:161.8px;width:11px;height:11px;border-radius:2.5px;border:1px solid #5a5a5a"></div>
  <svg class="a" style="left:1359.5px;top:164.3px" width="8" height="6" viewBox="0 0 8 6" fill="none" stroke="#e0e0e0" stroke-width="1.2"><path d="M1 1 L4 4.8 L7 1"/></svg>
  <div class="a" style="left:1204.5px;top:184.5px;width:71px;height:12.5px;border-radius:3px;background:#3c3c3c"></div>
  <div class="t" style="left:1207px;top:187.2px;font-size:7px;color:#e8e8e8">All Channels</div>
  <svg class="a" style="left:1266px;top:186px" width="6" height="10" viewBox="0 0 6 10" fill="none" stroke="#cfcfcf" stroke-width="1"><path d="M1 3.8 L3 1.8 L5 3.8 M1 6.2 L3 8.2 L5 6.2"/></svg>
  <div class="a" style="left:1292.5px;top:187px;width:8px;height:8px;border-radius:2px;background:#1e1e1e"></div>
  <div class="t" style="left:1302px;top:187.2px;font-size:7px;color:#cfcfcf">Layer</div>
  <div class="a" style="left:1328px;top:187px;width:8px;height:8px;border-radius:2px;background:#1e1e1e"></div>
  <div class="t" style="left:1337.5px;top:187.2px;font-size:7px;color:#cfcfcf">Marquee</div>
  <svg class="a" style="left:1204.7px;top:201.5px" width="164" height="77" viewBox="0 0 164 77"><rect width="164" height="77" fill="#000"/><g style="filter:blur(0.35px)"><polygon points="0,77 0,76.6 2,76.4 4,76.5 6,76.4 8,76.4 10,76.4 12,76.5 14,75.9 16,76.3 18,76.3 20,75.8 22,76.1 24,75.9 26,76.1 28,76.0 30,76.4 32,76.0 34,75.9 36,76.1 38,76.0 40,76.0 42,76.4 44,76.0 46,76.1 48,76.2 50,76.5 52,75.9 54,76.1 56,76.0 58,75.9 60,76.0 62,75.8 64,76.2 66,75.9 68,76.1 70,74.4 72,74.5 74,75.7 76,75.6 78,75.5 80,74.4 82,75.1 84,74.9 86,75.3 88,75.0 90,73.9 92,74.0 94,73.6 96,73.6 98,73.1 100,73.5 102,73.1 104,73.2 106,73.0 108,73.5 110,74.3 112,73.2 114,73.1 116,73.1 118,73.6 120,71.4 122,72.2 124,71.3 126,71.6 128,72.1 130,72.4 132,71.2 134,71.0 136,72.4 138,71.3 140,71.9 142,72.3 144,72.1 146,71.3 148,71.2 150,72.4 152,71.6 154,72.4 156,71.4 158,72.0 160,71.2 162,71.0 164,71.7 164,77" fill="#1e2c90"/><rect x="0" y="60" width="1.2" height="17" fill="#3a8a3a"/><rect x="4.8" y="64" width="1.2" height="13" fill="#c02222"/><path d="M17 77 L22.8 65.5 L28 77Z" fill="#2c48c0"/><path d="M26 77 L28.5 61 L31 77Z" fill="#141e60"/><path d="M100 77 L103 49 L106 77Z" fill="#16207a"/><rect x="114.5" y="69" width="1" height="8" fill="#40b040"/><rect x="117" y="67" width="1" height="10" fill="#40b040"/><rect x="120.5" y="68" width="1.2" height="9" fill="#d02020"/><rect x="130.5" y="38.6" width="1.1" height="38.4" fill="#50b850"/><rect x="140.5" y="45.6" width="1.2" height="31.4" fill="#c02020"/><rect x="142.7" y="0" width="4.7" height="77" fill="#1a22b0"/><path d="M147.4 77 L152 55 L155 37 L155.2 0 L156.2 0 L156.5 77Z" fill="#28a028"/><rect x="158.5" y="0" width="3.5" height="77" fill="#a81616"/><rect x="162" y="0" width="2" height="77" fill="#2a2a7a"/><path d="M151.8 13.5 L155.2 7 L158.6 13.5Z" fill="none" stroke="#c8c860" stroke-width="1"/></g></svg>
  <div class="t" style="left:1204.6px;top:283.6px;font-size:7.2px;color:#dadada">Mean: 233.28</div>
  <div class="t" style="left:1204.6px;top:293.5px;font-size:7.2px;color:#dadada">Std. Dev.: 34.93</div>
  <div class="t" style="left:1204.6px;top:303.5px;font-size:7.2px;color:#dadada">Median: 243</div>
  <div class="t" style="left:1204.6px;top:313.5px;font-size:7.2px;color:#dadada">Pixels: 271560</div>
  <div class="t" style="left:1288px;top:283.7px;font-size:7px;color:#555">Level: -</div>
  <div class="t" style="left:1288px;top:293.6px;font-size:7px;color:#555">Pixels: -</div>
  <div class="t" style="left:1288px;top:303.6px;font-size:7px;color:#555">Percentile: -</div>
  <div class="t" style="left:1205px;top:328.7px;font-size:7px;color:#d0d0d0">Min:</div>
  <div class="a" style="left:1224px;top:326.5px;width:36.5px;height:11px;border-radius:2px;background:#222"></div>
  <div class="t" style="left:1226.5px;top:328.7px;font-size:7px;color:#e0e0e0">0</div>
  <div class="t" style="left:1312.5px;top:328.7px;font-size:7px;color:#d0d0d0">Max:</div>
  <div class="a" style="left:1331px;top:326.5px;width:37.5px;height:11px;border-radius:2px;background:#222"></div>
  <div class="t" style="left:1333.5px;top:328.7px;font-size:7px;color:#e0e0e0">1</div>
  <div class="a" style="left:1199px;top:342px;width:176px;height:1px;background:#1a1a1a"></div>
  <div class="a" style="left:1199px;top:343px;width:176px;height:20px;background:#1d1d1d"></div>
  <div class="a" style="left:1205px;top:347.5px;width:2px;height:11px;background:#3a3a3a;border-radius:1px"></div>
  <div class="a" style="left:1211.5px;top:346.8px;width:28.5px;height:12.4px;border-radius:3px;background:#333"></div>
  <div class="t" style="left:1215.2px;top:350.6px;font-size:7.1px;color:#e8e8e8">Layers</div>
  <div class="t" style="left:1244px;top:350.6px;font-size:7.1px;color:#9a9a9a">Channels</div>
  <div class="t" style="left:1282px;top:350.6px;font-size:7.1px;color:#9a9a9a">Stock</div>
  <div class="a" style="left:1358px;top:347.5px;width:11px;height:11px;border-radius:2.5px;border:1px solid #5a5a5a"></div>
  <svg class="a" style="left:1359.5px;top:350.0px" width="8" height="6" viewBox="0 0 8 6" fill="none" stroke="#e0e0e0" stroke-width="1.2"><path d="M1 1 L4 4.8 L7 1"/></svg>
  <div class="t" style="left:1202.3px;top:371.8px;font-size:7.1px;color:#dcdcdc">Opacity:</div>
  <div class="t" style="left:1233px;top:371.9px;font-size:7px;color:#5a5a5a">100 %</div>
  <svg class="a" style="left:1262px;top:374px" width="6" height="4" viewBox="0 0 6 4" fill="none" stroke="#777" stroke-width="1"><path d="M0.8 0.8 L3 3 L5.2 0.8"/></svg>
  <div class="t" style="left:1273.8px;top:371.9px;font-size:7px;color:#5a5a5a">Normal</div>
  <svg class="a" style="left:1334.5px;top:370px" width="6" height="10" viewBox="0 0 6 10" fill="none" stroke="#666" stroke-width="1"><path d="M1 3.8 L3 1.8 L5 3.8 M1 6.2 L3 8.2 L5 6.2"/></svg>
  <svg class="a" style="left:1347.5px;top:369px" width="10" height="10" viewBox="0 0 10 10"><path d="M5 0.5 L6 2 L7.8 1.4 L8 3.2 L9.5 4.2 L8.6 5.5 L9.5 7 L7.8 7.4 L7.5 9.2 L6 8.5 L5 9.5 L4 8.5 L2.5 9.2 L2.2 7.4 L0.5 7 L1.4 5.5 L0.5 4.2 L2 3.2 L2.2 1.4 L4 2 Z" fill="#e0e0e0"/><circle cx="5" cy="5" r="1.6" fill="#2a2a2a"/></svg>
  <svg class="a" style="left:1362px;top:368px" width="7" height="11" viewBox="0 0 7 11"><path d="M1.5 5 V3.2 C1.5 0.8 5.5 0.8 5.5 3.2 V5" fill="none" stroke="#cfcfcf" stroke-width="1"/><rect x="0.5" y="5" width="6" height="5.5" rx="0.8" fill="#cfcfcf"/></svg>
  <div class="a" style="left:1199px;top:385px;width:166px;height:246px;background:#262626"></div>
  <div class="a" style="left:1199px;top:385.4px;width:165.5px;height:24px;background:#1d4c9b"></div>
  <div class="a" style="left:1342px;top:385.4px;width:1px;height:24px;background:#1a4088"></div>
  <svg class="a" style="left:1202px;top:400.4px" width="5" height="7" viewBox="0 0 5 7" fill="none" stroke="#e8e8e8" stroke-width="1.1"><path d="M1 0.8 L3.8 3.5 L1 6.2"/></svg>
  <div class="a" style="left:1210px;top:385.4px;width:24px;height:24px;background:#a3a3a3"></div>
  <div class="a" style="left:1200.5px;top:388.4px;width:6px;height:6px;border-radius:1px;background:#3a6cc0"></div>
  <div class="t" style="left:1242.5px;top:395.5px;font-size:7.1px;color:#f0f0f0;-webkit-text-stroke:0.2px #f0f0f0">Text</div>
  <svg class="a" style="left:1350px;top:395.2px" width="8" height="5" viewBox="0 0 8 5"><path d="M0.5 2.5 C2 0.3 6 0.3 7.5 2.5 C6 4.7 2 4.7 0.5 2.5Z" fill="#e6e6e6"/><circle cx="4" cy="2.5" r="1.1" fill="#1d4c9b"/></svg>
  <div class="a" style="left:1199px;top:410.0px;width:165.5px;height:24px;background:#2a2a2a"></div>
  <div class="a" style="left:1342px;top:410.0px;width:1px;height:24px;background:#222"></div>
  <svg class="a" style="left:1202px;top:419.0px" width="5" height="7" viewBox="0 0 5 7" fill="none" stroke="#e8e8e8" stroke-width="1.1"><path d="M1 0.8 L3.8 3.5 L1 6.2"/></svg>
  <div class="a" style="left:1210px;top:410.0px;width:24px;height:24px;background:#bdbdbd"></div>
  <div class="a" style="left:1211.3px;top:411.3px;width:21.5px;height:21.5px;border-radius:3px;background:#fbfbfb"></div>
  <svg class="a" style="left:1211px;top:411.0px" width="22" height="22" viewBox="0 0 22 22"><path d="M8 4 C9.5 5 12.5 5 14 4 L18 6 L18 9.5 L15.5 9.5 L15.5 19 H6.5 V9.5 L4 9.5 L4 6 Z" fill="#161616"/></svg>
  <div class="t" style="left:1242px;top:420.1px;font-size:7.1px;color:#f0f0f0;-webkit-text-stroke:0.2px #f0f0f0">Tee 3</div>
  <svg class="a" style="left:1350px;top:419.8px" width="8" height="5" viewBox="0 0 8 5"><path d="M0.5 2.5 C2 0.3 6 0.3 7.5 2.5 C6 4.7 2 4.7 0.5 2.5Z" fill="#e6e6e6"/><circle cx="4" cy="2.5" r="1.1" fill="#2a2a2a"/></svg>
  <div class="a" style="left:1199px;top:434.6px;width:165.5px;height:24px;background:#2a2a2a"></div>
  <div class="a" style="left:1342px;top:434.6px;width:1px;height:24px;background:#222"></div>
  <svg class="a" style="left:1202px;top:443.6px" width="5" height="7" viewBox="0 0 5 7" fill="none" stroke="#e8e8e8" stroke-width="1.1"><path d="M1 0.8 L3.8 3.5 L1 6.2"/></svg>
  <div class="a" style="left:1210px;top:434.6px;width:24px;height:24px;background:#bdbdbd"></div>
  <div class="a" style="left:1211.3px;top:435.9px;width:21.5px;height:21.5px;border-radius:3px;background:#fbfbfb"></div>
  <svg class="a" style="left:1211px;top:435.6px" width="22" height="22" viewBox="0 0 22 22"><path d="M8 4 C9.5 5 12.5 5 14 4 L18 6 L18 9.5 L15.5 9.5 L15.5 19 H6.5 V9.5 L4 9.5 L4 6 Z" fill="#161616"/></svg>
  <div class="t" style="left:1242px;top:444.7px;font-size:7.1px;color:#f0f0f0;-webkit-text-stroke:0.2px #f0f0f0">Tee 2</div>
  <svg class="a" style="left:1350px;top:444.4px" width="8" height="5" viewBox="0 0 8 5"><path d="M0.5 2.5 C2 0.3 6 0.3 7.5 2.5 C6 4.7 2 4.7 0.5 2.5Z" fill="#e6e6e6"/><circle cx="4" cy="2.5" r="1.1" fill="#2a2a2a"/></svg>
  <div class="a" style="left:1199px;top:459.2px;width:165.5px;height:24px;background:#2a2a2a"></div>
  <div class="a" style="left:1342px;top:459.2px;width:1px;height:24px;background:#222"></div>
  <svg class="a" style="left:1202px;top:468.2px" width="5" height="7" viewBox="0 0 5 7" fill="none" stroke="#e8e8e8" stroke-width="1.1"><path d="M1 0.8 L3.8 3.5 L1 6.2"/></svg>
  <div class="a" style="left:1210px;top:459.2px;width:24px;height:24px;background:#bdbdbd"></div>
  <div class="a" style="left:1211.3px;top:460.5px;width:21.5px;height:21.5px;border-radius:3px;background:#fbfbfb"></div>
  <svg class="a" style="left:1211px;top:460.2px" width="22" height="22" viewBox="0 0 22 22"><path d="M8 4 C9.5 5 12.5 5 14 4 L18 6 L18 9.5 L15.5 9.5 L15.5 19 H6.5 V9.5 L4 9.5 L4 6 Z" fill="#161616"/></svg>
  <div class="t" style="left:1242px;top:469.3px;font-size:7.1px;color:#f0f0f0;-webkit-text-stroke:0.2px #f0f0f0">Tee 1</div>
  <svg class="a" style="left:1350px;top:469.0px" width="8" height="5" viewBox="0 0 8 5"><path d="M0.5 2.5 C2 0.3 6 0.3 7.5 2.5 C6 4.7 2 4.7 0.5 2.5Z" fill="#e6e6e6"/><circle cx="4" cy="2.5" r="1.1" fill="#2a2a2a"/></svg>
  <div class="a" style="left:1199px;top:483.8px;width:165.5px;height:24px;background:#2a2a2a"></div>
  <div class="a" style="left:1342px;top:483.8px;width:1px;height:24px;background:#222"></div>
  <svg class="a" style="left:1202px;top:492.8px" width="5" height="7" viewBox="0 0 5 7" fill="none" stroke="#e8e8e8" stroke-width="1.1"><path d="M1 0.8 L3.8 3.5 L1 6.2"/></svg>
  <div class="a" style="left:1210px;top:483.8px;width:24px;height:24px;background:#bdbdbd"></div>
  <div class="a" style="left:1211.3px;top:485.1px;width:21.5px;height:21.5px;border-radius:3px;background:#fbfbfb"></div>
  <svg class="a" style="left:1211px;top:484.8px" width="22" height="22" viewBox="0 0 22 22"><rect x="10.3" y="2" width="1.4" height="2" fill="#222"/><rect x="9.2" y="4" width="3.6" height="2.5" fill="#333"/><rect x="9" y="6.5" width="4" height="13" fill="#e8e8ea" stroke="#c8c8c8" stroke-width="0.4"/></svg>
  <div class="t" style="left:1242px;top:493.9px;font-size:7.1px;color:#f0f0f0;-webkit-text-stroke:0.2px #f0f0f0">Bottle 3</div>
  <svg class="a" style="left:1350px;top:493.6px" width="8" height="5" viewBox="0 0 8 5"><path d="M0.5 2.5 C2 0.3 6 0.3 7.5 2.5 C6 4.7 2 4.7 0.5 2.5Z" fill="#e6e6e6"/><circle cx="4" cy="2.5" r="1.1" fill="#2a2a2a"/></svg>
  <div class="a" style="left:1199px;top:508.4px;width:165.5px;height:24px;background:#2a2a2a"></div>
  <div class="a" style="left:1342px;top:508.4px;width:1px;height:24px;background:#222"></div>
  <svg class="a" style="left:1202px;top:517.4px" width="5" height="7" viewBox="0 0 5 7" fill="none" stroke="#e8e8e8" stroke-width="1.1"><path d="M1 0.8 L3.8 3.5 L1 6.2"/></svg>
  <div class="a" style="left:1210px;top:508.4px;width:24px;height:24px;background:#bdbdbd"></div>
  <div class="a" style="left:1211.3px;top:509.7px;width:21.5px;height:21.5px;border-radius:3px;background:#fbfbfb"></div>
  <svg class="a" style="left:1211px;top:509.4px" width="22" height="22" viewBox="0 0 22 22"><rect x="10.3" y="2" width="1.4" height="2" fill="#222"/><rect x="9.2" y="4" width="3.6" height="2.5" fill="#333"/><rect x="9" y="6.5" width="4" height="13" fill="#dfe2d8" stroke="#c8c8c8" stroke-width="0.4"/><rect x="9" y="14" width="4" height="5" fill="#6a6a20"/><rect x="9" y="8" width="4" height="4" fill="#3a4a7a"/></svg>
  <div class="t" style="left:1242px;top:518.5px;font-size:7.1px;color:#f0f0f0;-webkit-text-stroke:0.2px #f0f0f0">Bottle 2</div>
  <svg class="a" style="left:1350px;top:518.2px" width="8" height="5" viewBox="0 0 8 5"><path d="M0.5 2.5 C2 0.3 6 0.3 7.5 2.5 C6 4.7 2 4.7 0.5 2.5Z" fill="#e6e6e6"/><circle cx="4" cy="2.5" r="1.1" fill="#2a2a2a"/></svg>
  <div class="a" style="left:1199px;top:533.0px;width:165.5px;height:24px;background:#2a2a2a"></div>
  <div class="a" style="left:1342px;top:533.0px;width:1px;height:24px;background:#222"></div>
  <svg class="a" style="left:1202px;top:542.0px" width="5" height="7" viewBox="0 0 5 7" fill="none" stroke="#e8e8e8" stroke-width="1.1"><path d="M1 0.8 L3.8 3.5 L1 6.2"/></svg>
  <div class="a" style="left:1210px;top:533.0px;width:24px;height:24px;background:#bdbdbd"></div>
  <div class="a" style="left:1211.3px;top:534.3px;width:21.5px;height:21.5px;border-radius:3px;background:#fbfbfb"></div>
  <svg class="a" style="left:1211px;top:534.0px" width="22" height="22" viewBox="0 0 22 22"><rect x="10.3" y="2" width="1.4" height="2" fill="#222"/><rect x="9.2" y="4" width="3.6" height="2.5" fill="#333"/><rect x="9" y="6.5" width="4" height="13" fill="#ecebdc" stroke="#c8c8c8" stroke-width="0.4"/></svg>
  <div class="t" style="left:1242px;top:543.1px;font-size:7.1px;color:#f0f0f0;-webkit-text-stroke:0.2px #f0f0f0">Bottle 1</div>
  <svg class="a" style="left:1350px;top:542.8px" width="8" height="5" viewBox="0 0 8 5"><path d="M0.5 2.5 C2 0.3 6 0.3 7.5 2.5 C6 4.7 2 4.7 0.5 2.5Z" fill="#e6e6e6"/><circle cx="4" cy="2.5" r="1.1" fill="#2a2a2a"/></svg>
  <div class="a" style="left:1199px;top:557.6px;width:165.5px;height:24px;background:#2a2a2a"></div>
  <div class="a" style="left:1342px;top:557.6px;width:1px;height:24px;background:#222"></div>
  <svg class="a" style="left:1202px;top:566.6px" width="5" height="7" viewBox="0 0 5 7" fill="none" stroke="#e8e8e8" stroke-width="1.1"><path d="M1 0.8 L3.8 3.5 L1 6.2"/></svg>
  <div class="a" style="left:1210px;top:557.6px;width:24px;height:24px;background:#bdbdbd"></div>
  <div class="a" style="left:1211.3px;top:558.9px;width:21.5px;height:21.5px;border-radius:3px;background:#fbfbfb"></div>
  <svg class="a" style="left:1211px;top:558.6px" width="22" height="22" viewBox="0 0 22 22"><path d="M9 4 C10 5 12 5 13 4 L17 6 L18 11 L15.5 11 L15.5 19 H6.5 V11 L4 11 L5 6 Z" fill="#bdbdbd"/></svg>
  <div class="t" style="left:1242px;top:567.7px;font-size:7.1px;color:#f0f0f0;-webkit-text-stroke:0.2px #f0f0f0">Jersey 2</div>
  <svg class="a" style="left:1350px;top:567.4px" width="8" height="5" viewBox="0 0 8 5"><path d="M0.5 2.5 C2 0.3 6 0.3 7.5 2.5 C6 4.7 2 4.7 0.5 2.5Z" fill="#e6e6e6"/><circle cx="4" cy="2.5" r="1.1" fill="#2a2a2a"/></svg>
  <div class="a" style="left:1199px;top:582.2px;width:165.5px;height:24px;background:#2a2a2a"></div>
  <div class="a" style="left:1342px;top:582.2px;width:1px;height:24px;background:#222"></div>
  <svg class="a" style="left:1202px;top:591.2px" width="5" height="7" viewBox="0 0 5 7" fill="none" stroke="#e8e8e8" stroke-width="1.1"><path d="M1 0.8 L3.8 3.5 L1 6.2"/></svg>
  <div class="a" style="left:1210px;top:582.2px;width:24px;height:24px;background:#bdbdbd"></div>
  <div class="a" style="left:1211.3px;top:583.5px;width:21.5px;height:21.5px;border-radius:3px;background:#fbfbfb"></div>
  <svg class="a" style="left:1211px;top:583.2px" width="22" height="22" viewBox="0 0 22 22"><path d="M9 4 C10 5 12 5 13 4 L17 6 L18 11 L15.5 11 L15.5 19 H6.5 V11 L4 11 L5 6 Z" fill="#ececec"/></svg>
  <div class="t" style="left:1242px;top:592.3px;font-size:7.1px;color:#f0f0f0;-webkit-text-stroke:0.2px #f0f0f0">Jersey 3</div>
  <svg class="a" style="left:1350px;top:592.0px" width="8" height="5" viewBox="0 0 8 5"><path d="M0.5 2.5 C2 0.3 6 0.3 7.5 2.5 C6 4.7 2 4.7 0.5 2.5Z" fill="#e6e6e6"/><circle cx="4" cy="2.5" r="1.1" fill="#2a2a2a"/></svg>
  <div class="a" style="left:1199px;top:606.8px;width:165.5px;height:24px;background:#2a2a2a"></div>
  <div class="a" style="left:1342px;top:606.8px;width:1px;height:24px;background:#222"></div>
  <svg class="a" style="left:1202px;top:615.8px" width="5" height="7" viewBox="0 0 5 7" fill="none" stroke="#e8e8e8" stroke-width="1.1"><path d="M1 0.8 L3.8 3.5 L1 6.2"/></svg>
  <div class="a" style="left:1210px;top:606.8px;width:24px;height:24px;background:#bdbdbd"></div>
  <div class="a" style="left:1211.3px;top:608.1px;width:21.5px;height:21.5px;border-radius:3px;background:#fbfbfb"></div>
  <svg class="a" style="left:1211px;top:607.8px" width="22" height="22" viewBox="0 0 22 22"><path d="M9 4 C10 5 12 5 13 4 L17 6 L18 11 L15.5 11 L15.5 19 H6.5 V11 L4 11 L5 6 Z" fill="#e9e9e2"/></svg>
  <div class="t" style="left:1242px;top:616.9px;font-size:7.1px;color:#f0f0f0;-webkit-text-stroke:0.2px #f0f0f0">Jersey 1</div>
  <svg class="a" style="left:1350px;top:616.6px" width="8" height="5" viewBox="0 0 8 5"><path d="M0.5 2.5 C2 0.3 6 0.3 7.5 2.5 C6 4.7 2 4.7 0.5 2.5Z" fill="#e6e6e6"/><circle cx="4" cy="2.5" r="1.1" fill="#2a2a2a"/></svg>
  <div class="a" style="left:1368.5px;top:387px;width:3.5px;height:170px;border-radius:2px;background:#4a4a4a"></div>
  <div class="a" style="left:1199px;top:631px;width:176px;height:21.5px;background:#2a2a2a"></div>
  <svg class="a" style="left:1203px;top:637px" width="12" height="12" viewBox="0 0 12 12" fill="none" stroke="#cfcfcf" stroke-width="1" opacity=".55"><rect x="0.8" y="2" width="9" height="9" rx="1"/><path d="M4 8 L4.5 6 L10 0.8 L11.2 2 L5.8 7.5 Z"/></svg>
  <svg class="a" style="left:1238.5px;top:637px" width="12" height="12" viewBox="0 0 12 12"><rect x="0.3" y="0.3" width="11.4" height="11.4" rx="1.2" fill="#d8d8d8"/><path d="M2.6 9.6 V2.6 H5.6 M2.6 5.8 H5 M5.8 4.2 L9.6 9.6 M9.6 4.2 L5.8 9.6" stroke="#2a2a2a" stroke-width="1.3" fill="none"/></svg>
  <svg class="a" style="left:1253.5px;top:637px" width="12" height="12" viewBox="0 0 12 12"><rect x="0.3" y="0.3" width="11.4" height="11.4" rx="1.5" fill="#d8d8d8"/><circle cx="6" cy="6" r="3.3" fill="#2a2a2a"/></svg>
  <svg class="a" style="left:1267.5px;top:637px" width="12" height="12" viewBox="0 0 12 12"><path d="M1 0.8 H11 L7 6 L11 11.2 H1 L5 6 Z" fill="#e6e6e6"/></svg>
  <svg class="a" style="left:1282.5px;top:637px" width="12" height="12" viewBox="0 0 12 12"><circle cx="6" cy="6" r="5" fill="none" stroke="#e6e6e6" stroke-width="1.2"/><path d="M9.5 2.5 A5 5 0 0 1 2.5 9.5 Z" fill="#e6e6e6"/></svg>
  <svg class="a" style="left:1314.5px;top:637px" width="12" height="12" viewBox="0 0 12 12"><rect x="0.6" y="0.6" width="10.8" height="10.8" rx="1" fill="none" stroke="#cfcfcf"/><rect x="2.3" y="2.3" width="5" height="5" fill="#d8d8d8"/><circle cx="7" cy="7.3" r="2.6" fill="#d8d8d8" stroke="#2a2a2a" stroke-width="0.6"/></svg>
  <svg class="a" style="left:1329px;top:637px" width="12" height="12" viewBox="0 0 12 12" fill="none" stroke="#cfcfcf" stroke-width="1"><path d="M0.8 2 H4.5 L5.5 3.2 H11.2 V11 H0.8 Z M0.8 4.5 H11.2"/></svg>
  <svg class="a" style="left:1343px;top:637px" width="12" height="12" viewBox="0 0 12 12"><rect x="0.5" y="0.5" width="2.4" height="2.4" fill="#d8d8d8"/><rect x="5.3" y="0.5" width="2.4" height="2.4" fill="#d8d8d8"/><rect x="10.1" y="0.5" width="2.4" height="2.4" fill="#d8d8d8"/><rect x="2.9" y="2.9" width="2.4" height="2.4" fill="#d8d8d8"/><rect x="7.7" y="2.9" width="2.4" height="2.4" fill="#d8d8d8"/><rect x="0.5" y="5.3" width="2.4" height="2.4" fill="#d8d8d8"/><rect x="5.3" y="5.3" width="2.4" height="2.4" fill="#d8d8d8"/><rect x="10.1" y="5.3" width="2.4" height="2.4" fill="#d8d8d8"/><rect x="2.9" y="7.7" width="2.4" height="2.4" fill="#d8d8d8"/><rect x="7.7" y="7.7" width="2.4" height="2.4" fill="#d8d8d8"/><rect x="0.5" y="10.1" width="2.4" height="2.4" fill="#d8d8d8"/><rect x="5.3" y="10.1" width="2.4" height="2.4" fill="#d8d8d8"/><rect x="10.1" y="10.1" width="2.4" height="2.4" fill="#d8d8d8"/></svg>
  <svg class="a" style="left:1358px;top:636.5px" width="12" height="13" viewBox="0 0 12 13" fill="none" stroke="#cfcfcf" stroke-width="1"><path d="M1 2.5 H11 M4 2.5 V1 H8 V2.5 M2.2 2.5 L3 12 H9 L9.8 2.5 M5 4.5 V10 M7 4.5 V10"/></svg>
  <div class="a" style="left:1199px;top:652px;width:176px;height:1px;background:#1a1a1a"></div>
  <div class="a" style="left:1199px;top:653px;width:176px;height:21px;background:#1d1d1d"></div>
  <div class="a" style="left:1205px;top:657.5px;width:2px;height:12px;background:#3a3a3a;border-radius:1px"></div>
  <div class="a" style="left:1211px;top:657.3px;width:38px;height:12.4px;border-radius:3px;background:#333"></div>
  <div class="t" style="left:1214.7px;top:661.1px;font-size:7.1px;color:#e8e8e8">Navigator</div>
  <div class="t" style="left:1254.8px;top:661.1px;font-size:7.1px;color:#9a9a9a">Transform</div>
  <div class="t" style="left:1294.7px;top:661.1px;font-size:7.1px;color:#9a9a9a">History</div>
  <div class="a" style="left:1358px;top:658.0px;width:11px;height:11px;border-radius:2.5px;border:1px solid #5a5a5a"></div>
  <svg class="a" style="left:1359.5px;top:660.5px" width="8" height="6" viewBox="0 0 8 6" fill="none" stroke="#e0e0e0" stroke-width="1.2"><path d="M1 1 L4 4.8 L7 1"/></svg>
  <div class="a" style="left:1206px;top:680.5px;width:9px;height:8.5px;border-radius:2px;background:#232323"></div>
  <div class="a" style="left:1208px;top:684.5px;width:5px;height:1px;background:#777"></div>
  <div class="a" style="left:1220px;top:682px;width:103px;height:5.5px;border-radius:3px;background:#1b1b1b"></div>
  <div class="a" style="left:1220.5px;top:682.5px;width:23px;height:4.5px;border-radius:2px;background:#2a6ae0"></div>
  <div class="a" style="left:1241.8px;top:680.3px;width:3.5px;height:9px;border-radius:1px;background:#e8e8e8"></div>
  <div class="a" style="left:1327.5px;top:680.5px;width:9px;height:8.5px;border-radius:2px;background:#232323"></div>
  <div class="a" style="left:1329.5px;top:684.5px;width:5px;height:1px;background:#777"></div><div class="a" style="left:1331.5px;top:682.5px;width:1px;height:5px;background:#777"></div>
  <div class="a" style="left:1342px;top:679px;width:27.5px;height:11.5px;border-radius:2px;background:#232323"></div>
  <div class="t" style="left:1343.5px;top:681.1px;font-size:7.2px;color:#f0f0f0;-webkit-text-stroke:0.2px #f0f0f0">58 %</div>
  <div class="a" style="left:1219.5px;top:701.5px;width:135.5px;height:95.5px;background:#f5ecd9;overflow:hidden">
   <div class="a" style="left:-43.25px;top:-33.40px;width:1470px;height:910px;transform:scale(0.167);transform-origin:0 0">
  <div class="t" style="left:304px;top:234.8px;font-size:6.1px;font-weight:bold;color:#221d18">DE POINTE</div>
  <div class="t" style="left:547.5px;top:235.9px;font-size:5.95px;font-weight:bold;color:#221d18">SPRING/SUMMER CATALOGUE</div>
  <div class="t" style="left:790px;top:234.8px;font-size:6.15px;font-weight:bold;color:#221d18">www.depointe.cc</div>
  <div class="t" style="left:303px;top:279.7px;font-size:42.5px;font-family:'Liberation Serif',serif;font-weight:bold;color:#0e0b1c;-webkit-text-stroke:0.7px #0e0b1c;transform:scaleX(0.98);transform-origin:0 0">S/S</div>
  <div class="t" style="left:303px;top:320.7px;font-size:42.5px;font-family:'Liberation Serif',serif;font-weight:bold;color:#0e0b1c;-webkit-text-stroke:0.9px #0e0b1c;transform:scaleX(0.813);transform-origin:0 0">COLLECTION</div>
  <div class="t" style="left:304px;top:371.1px;font-size:20.5px;color:#3a3530;transform:scale(1.01,1.13);transform-origin:0 0;opacity:.72">SHOP THE</div>
  <div class="t" style="left:304px;top:393.2px;font-size:20.5px;color:#3a3530;transform:scale(1.01,1.13);transform-origin:0 0;opacity:.72">RANGE</div>
  <div class="t" style="left:302.5px;top:428.0px;font-size:6.9px;color:#948c7e">Feel fresh with our revitalising spring/summer</div>
  <div class="t" style="left:302.5px;top:438.2px;font-size:6.9px;color:#948c7e">collection. Featuring jersey tops, bib shorts, t-shirts</div>
  <div class="t" style="left:302.5px;top:448.5px;font-size:6.9px;color:#948c7e">and other products in muted tones like buttermilk</div>
  <div class="t" style="left:302.5px;top:458.7px;font-size:6.9px;color:#948c7e">yellow, baby blue and pale grey, the new range is</div>
  <div class="t" style="left:302.5px;top:468.9px;font-size:6.9px;color:#948c7e">both fashionable and expertly designed to keep you</div>
  <div class="t" style="left:302.5px;top:479.1px;font-size:6.9px;color:#948c7e">cool and comfortable on your rides. Available in all</div>
  <div class="t" style="left:302.5px;top:489.3px;font-size:6.9px;color:#948c7e">sizes. Bidon designed to fit perfectly in your bike's</div>
  <div class="t" style="left:302.5px;top:499.6px;font-size:6.9px;color:#948c7e">cupholder or jersey pocket.</div>
  <div class="t" style="left:304px;top:542.1px;font-size:8.4px;font-weight:bold;color:#1a1614">Sizing Chart</div>
  <div class="a" style="left:304px;top:563px;width:214px;height:22.5px;background:#d7c89a"></div>
  <div class="a" style="left:304px;top:585.5px;width:214px;height:68px;background:#f2e9d6"></div>
  <div class="a" style="left:304px;top:562.5px;width:214px;height:1px;background:#6d6244"></div>
  <div class="a" style="left:304px;top:574.1px;width:214px;height:1px;background:#6d6244"></div>
  <div class="a" style="left:304px;top:585.0px;width:214px;height:1px;background:#6d6244"></div>
  <div class="a" style="left:304px;top:594.9px;width:214px;height:1px;background:#6d6244"></div>
  <div class="a" style="left:304px;top:604.3px;width:214px;height:1px;background:#6d6244"></div>
  <div class="a" style="left:304px;top:614.0px;width:214px;height:1px;background:#6d6244"></div>
  <div class="a" style="left:304px;top:623.8px;width:214px;height:1px;background:#6d6244"></div>
  <div class="a" style="left:304px;top:633.2px;width:214px;height:1px;background:#6d6244"></div>
  <div class="a" style="left:304px;top:643.2px;width:214px;height:1px;background:#6d6244"></div>
  <div class="a" style="left:304px;top:652.8px;width:214px;height:1px;background:#6d6244"></div>
  <div class="a" style="left:303.5px;top:563px;width:1px;height:90.5px;background:#6d6244"></div>
  <div class="a" style="left:357.0px;top:563px;width:1px;height:90.5px;background:#6d6244"></div>
  <div class="a" style="left:411.0px;top:563px;width:1px;height:90.5px;background:#6d6244"></div>
  <div class="a" style="left:464.5px;top:563px;width:1px;height:90.5px;background:#6d6244"></div>
  <div class="a" style="left:517.5px;top:563px;width:1px;height:90.5px;background:#6d6244"></div>
  <div class="t" style="left:304px;width:53.5px;text-align:center;top:565.7px;font-size:6px;color:#8a7848">SIZE</div>
  <div class="t" style="left:357.5px;width:54.0px;text-align:center;top:565.7px;font-size:6px;color:#8a7848">CHEST WIDTH</div>
  <div class="t" style="left:411.5px;width:53.5px;text-align:center;top:565.7px;font-size:6px;color:#8a7848">CHEST SIZE</div>
  <div class="t" style="left:465px;width:53px;text-align:center;top:565.7px;font-size:6px;color:#8a7848">TO FIT SIZE</div>
  <div class="t" style="left:357.5px;width:54.0px;text-align:center;top:576.9px;font-size:6px;color:#8a7848">CM&nbsp;&nbsp;INCH</div>
  <div class="t" style="left:411.5px;width:53.5px;text-align:center;top:576.9px;font-size:6px;color:#8a7848">CM&nbsp;&nbsp;INCH</div>
  <div class="t" style="left:465px;width:53px;text-align:center;top:576.9px;font-size:6px;color:#8a7848">INCH</div>
  <div class="t" style="left:304px;width:53.5px;text-align:center;top:587.4px;font-size:6px;color:#5e5545">XXS</div>
  <div class="t" style="left:357.5px;width:54.0px;text-align:center;top:587.4px;font-size:6px;color:#5e5545">45&nbsp;&nbsp;&nbsp;16</div>
  <div class="t" style="left:411.5px;width:53.5px;text-align:center;top:587.4px;font-size:6px;color:#5e5545">96&nbsp;&nbsp;&nbsp;35</div>
  <div class="t" style="left:465px;width:53px;text-align:center;top:587.4px;font-size:6px;color:#5e5545">29-32"</div>
  <div class="t" style="left:304px;width:53.5px;text-align:center;top:597.0px;font-size:6px;color:#5e5545">XS</div>
  <div class="t" style="left:357.5px;width:54.0px;text-align:center;top:597.0px;font-size:6px;color:#5e5545">48&nbsp;&nbsp;&nbsp;19</div>
  <div class="t" style="left:411.5px;width:53.5px;text-align:center;top:597.0px;font-size:6px;color:#5e5545">96&nbsp;&nbsp;&nbsp;38</div>
  <div class="t" style="left:465px;width:53px;text-align:center;top:597.0px;font-size:6px;color:#5e5545">33-35"</div>
  <div class="t" style="left:304px;width:53.5px;text-align:center;top:606.5px;font-size:6px;color:#5e5545">S</div>
  <div class="t" style="left:357.5px;width:54.0px;text-align:center;top:606.5px;font-size:6px;color:#5e5545">51&nbsp;&nbsp;&nbsp;22</div>
  <div class="t" style="left:411.5px;width:53.5px;text-align:center;top:606.5px;font-size:6px;color:#5e5545">99&nbsp;&nbsp;&nbsp;41</div>
  <div class="t" style="left:465px;width:53px;text-align:center;top:606.5px;font-size:6px;color:#5e5545">38-41"</div>
  <div class="t" style="left:304px;width:53.5px;text-align:center;top:616.3px;font-size:6px;color:#5e5545">M</div>
  <div class="t" style="left:357.5px;width:54.0px;text-align:center;top:616.3px;font-size:6px;color:#5e5545">54&nbsp;&nbsp;&nbsp;25</div>
  <div class="t" style="left:411.5px;width:53.5px;text-align:center;top:616.3px;font-size:6px;color:#5e5545">102&nbsp;&nbsp;&nbsp;44</div>
  <div class="t" style="left:465px;width:53px;text-align:center;top:616.3px;font-size:6px;color:#5e5545">44-47"</div>
  <div class="t" style="left:304px;width:53.5px;text-align:center;top:625.9px;font-size:6px;color:#5e5545">L</div>
  <div class="t" style="left:357.5px;width:54.0px;text-align:center;top:625.9px;font-size:6px;color:#5e5545">57&nbsp;&nbsp;&nbsp;28</div>
  <div class="t" style="left:411.5px;width:53.5px;text-align:center;top:625.9px;font-size:6px;color:#5e5545">105&nbsp;&nbsp;&nbsp;47</div>
  <div class="t" style="left:465px;width:53px;text-align:center;top:625.9px;font-size:6px;color:#5e5545">50-53"</div>
  <div class="t" style="left:304px;width:53.5px;text-align:center;top:635.6px;font-size:6px;color:#5e5545">XL</div>
  <div class="t" style="left:357.5px;width:54.0px;text-align:center;top:635.6px;font-size:6px;color:#5e5545">60&nbsp;&nbsp;&nbsp;31</div>
  <div class="t" style="left:411.5px;width:53.5px;text-align:center;top:635.6px;font-size:6px;color:#5e5545">108&nbsp;&nbsp;&nbsp;50</div>
  <div class="t" style="left:465px;width:53px;text-align:center;top:635.6px;font-size:6px;color:#5e5545">56-59"</div>
  <div class="t" style="left:304px;width:53.5px;text-align:center;top:645.4px;font-size:6px;color:#5e5545">XXL</div>
  <div class="t" style="left:357.5px;width:54.0px;text-align:center;top:645.4px;font-size:6px;color:#5e5545">63&nbsp;&nbsp;&nbsp;34</div>
  <div class="t" style="left:411.5px;width:53.5px;text-align:center;top:645.4px;font-size:6px;color:#5e5545">111&nbsp;&nbsp;&nbsp;53</div>
  <div class="t" style="left:465px;width:53px;text-align:center;top:645.4px;font-size:6px;color:#5e5545">62-65"</div>
  <!-- PRODUCTS -->
  <svg class="a" style="left:576.3px;top:373.3px;filter:drop-shadow(0 0 1.5px rgba(180,160,120,.35))" width="89" height="90" viewBox="0 0 89 90"><rect x="0" y="0" width="89" height="90" rx="8.5" fill="#fefdfa"/><path d="M38 15 C41 17 48 17 51 15 L58 16.5 C64 18 69 19.5 71 23 C72 30 72 37 72.5 44 C69 45 65.5 45.5 62 44.5 L62.5 78.5 C54 79.5 35 79.5 26.5 78.5 L27 44.5 C23.5 45.5 20 45 16.5 44 C17 37 17 30 18 23 C20 19.5 25 18 31 16.5 Z" fill="#e9eadd"/><path d="M38 15 C38 11.5 51 11.5 51 15 C48 17.5 41 17.5 38 15Z" fill="#f4f4ee"/><path d="M27 44.5 C26 38 27 30 28 26 M62 44.5 C63 38 62 30 61 26" stroke="#000" stroke-opacity=".07" stroke-width="1.5" fill="none"/></svg>
  <svg class="a" style="left:673.8px;top:373.3px;filter:drop-shadow(0 0 1.5px rgba(180,160,120,.35))" width="89" height="90" viewBox="0 0 89 90"><rect x="0" y="0" width="89" height="90" rx="8.5" fill="#fefdfa"/><path d="M38 15 C41 17 48 17 51 15 L58 16.5 C64 18 69 19.5 71 23 C72 30 72 37 72.5 44 C69 45 65.5 45.5 62 44.5 L62.5 78.5 C54 79.5 35 79.5 26.5 78.5 L27 44.5 C23.5 45.5 20 45 16.5 44 C17 37 17 30 18 23 C20 19.5 25 18 31 16.5 Z" fill="#b9b9b9"/><path d="M38 15 C38 11.5 51 11.5 51 15 C48 17.5 41 17.5 38 15Z" fill="#e6e6e6"/><path d="M27 44.5 C26 38 27 30 28 26 M62 44.5 C63 38 62 30 61 26" stroke="#000" stroke-opacity=".07" stroke-width="1.5" fill="none"/><path d="M44.5 16 V77" stroke="#d9d9d9" stroke-width="0.8"/></svg>
  <svg class="a" style="left:770.6px;top:373.3px;filter:drop-shadow(0 0 1.5px rgba(180,160,120,.35))" width="89" height="90" viewBox="0 0 89 90"><rect x="0" y="0" width="89" height="90" rx="8.5" fill="#fefdfa"/><path d="M38 15 C41 17 48 17 51 15 L58 16.5 C64 18 69 19.5 71 23 C72 30 72 37 72.5 44 C69 45 65.5 45.5 62 44.5 L62.5 78.5 C54 79.5 35 79.5 26.5 78.5 L27 44.5 C23.5 45.5 20 45 16.5 44 C17 37 17 30 18 23 C20 19.5 25 18 31 16.5 Z" fill="#e7eaee"/><path d="M38 15 C38 11.5 51 11.5 51 15 C48 17.5 41 17.5 38 15Z" fill="#f3f4f6"/><path d="M27 44.5 C26 38 27 30 28 26 M62 44.5 C63 38 62 30 61 26" stroke="#000" stroke-opacity=".07" stroke-width="1.5" fill="none"/></svg>
  <svg class="a" style="left:576.3px;top:470.1px;filter:drop-shadow(0 0 1.5px rgba(180,160,120,.35))" width="89" height="90" viewBox="0 0 89 90"><rect x="0" y="0" width="89" height="90" rx="8.5" fill="#fefdfa"/><path d="M42 8 H47 V13 H42 Z" fill="#1a1a1a"/><path d="M35 15 C35 13 38 12.5 44.5 12.5 C51 12.5 54 13 54 15 L55 21 C55 22.5 53 23 44.5 23 C36 23 34 22.5 34 21 Z" fill="#1e1e1e"/><path d="M33 23 H56 C57 28 57.5 33 56.5 38 C56 41 57 44 57.5 48 L57.5 80 C57.5 82 55 83 44.5 83 C34 83 31.5 82 31.5 80 L31.5 48 C32 44 33 41 32.5 38 C31.5 33 32 28 33 23 Z" fill="#e7dcc2"/><rect x="31.5" y="50" width="26" height="14" fill="#f9f9f5"/><text x="44.5" y="59" text-anchor="middle" font-family="Liberation Sans" font-weight="bold" font-style="italic" font-size="5" transform="rotate(-3 44.5 59)" fill="#1a1a1a">de pointe</text></svg>
  <svg class="a" style="left:673.8px;top:470.1px;filter:drop-shadow(0 0 1.5px rgba(180,160,120,.35))" width="89" height="90" viewBox="0 0 89 90"><rect x="0" y="0" width="89" height="90" rx="8.5" fill="#fefdfa"/><path d="M42 8 H47 V13 H42 Z" fill="#1a1a1a"/><path d="M35 15 C35 13 38 12.5 44.5 12.5 C51 12.5 54 13 54 15 L55 21 C55 22.5 53 23 44.5 23 C36 23 34 22.5 34 21 Z" fill="#1e1e1e"/><path d="M33 23 H56 C57 28 57.5 33 56.5 38 C56 41 57 44 57.5 48 L57.5 80 C57.5 82 55 83 44.5 83 C34 83 31.5 82 31.5 80 L31.5 48 C32 44 33 41 32.5 38 C31.5 33 32 28 33 23 Z" fill="#f4f4f4"/><ellipse cx="35.5" cy="26.8" rx="2.9" ry="2.3" transform="rotate(24 35.5 27)" fill="#1e2a70"/><ellipse cx="37.0" cy="28.8" rx="1.3" ry="1" fill="#8a8a2a"/><ellipse cx="41.7" cy="27.7" rx="2.9" ry="2.3" transform="rotate(24 41.7 27)" fill="#1e2a70"/><ellipse cx="47.9" cy="26.5" rx="2.9" ry="2.3" transform="rotate(28 47.9 27)" fill="#14143a"/><ellipse cx="49.4" cy="28.8" rx="1.3" ry="1" fill="#8a8a2a"/><ellipse cx="54.1" cy="27.8" rx="2.9" ry="2.3" transform="rotate(-5 54.1 27)" fill="#0e0e22"/><ellipse cx="55.6" cy="28.8" rx="1.3" ry="1" fill="#8a8a2a"/><ellipse cx="38.6" cy="33.2" rx="2.9" ry="2.3" transform="rotate(19 38.6 33)" fill="#3a5ab0"/><ellipse cx="44.8" cy="32.3" rx="2.9" ry="2.3" transform="rotate(-9 44.8 33)" fill="#2f4fa8"/><ellipse cx="46.3" cy="34.8" rx="1.3" ry="1" fill="#8a8a2a"/><ellipse cx="51.0" cy="33.4" rx="2.9" ry="2.3" transform="rotate(-23 51.0 33)" fill="#0e0e22"/><ellipse cx="52.5" cy="34.8" rx="1.3" ry="1" fill="#8a8a2a"/><ellipse cx="35.5" cy="38.2" rx="2.9" ry="2.3" transform="rotate(-1 35.5 39)" fill="#1e2a70"/><ellipse cx="41.7" cy="39.3" rx="2.9" ry="2.3" transform="rotate(-18 41.7 39)" fill="#14143a"/><ellipse cx="43.2" cy="40.8" rx="1.3" ry="1" fill="#8a8a2a"/><ellipse cx="47.9" cy="39.8" rx="2.9" ry="2.3" transform="rotate(19 47.9 39)" fill="#14143a"/><ellipse cx="49.4" cy="40.8" rx="1.3" ry="1" fill="#8a8a2a"/><ellipse cx="54.1" cy="38.4" rx="2.9" ry="2.3" transform="rotate(-4 54.1 39)" fill="#0e0e22"/><ellipse cx="38.6" cy="44.6" rx="2.9" ry="2.3" transform="rotate(21 38.6 45)" fill="#1e2a70"/><ellipse cx="44.8" cy="44.5" rx="2.9" ry="2.3" transform="rotate(-5 44.8 45)" fill="#1e2a70"/><ellipse cx="51.0" cy="45.2" rx="2.9" ry="2.3" transform="rotate(-24 51.0 45)" fill="#3a5ab0"/><ellipse cx="52.5" cy="46.8" rx="1.3" ry="1" fill="#8a8a2a"/><path d="M31.5 64 H57.5 V80 C57.5 82 55 83 44.5 83 C34 83 31.5 82 31.5 80 Z" fill="#8a7a1e"/><rect x="31.5" y="50" width="26" height="14" fill="#f9f9f5"/><text x="44.5" y="59" text-anchor="middle" font-family="Liberation Sans" font-weight="bold" font-style="italic" font-size="5" transform="rotate(-3 44.5 59)" fill="#1a1a1a">de pointe</text></svg>
  <svg class="a" style="left:770.6px;top:470.1px;filter:drop-shadow(0 0 1.5px rgba(180,160,120,.35))" width="89" height="90" viewBox="0 0 89 90"><rect x="0" y="0" width="89" height="90" rx="8.5" fill="#fefdfa"/><path d="M42 8 H47 V13 H42 Z" fill="#1a1a1a"/><path d="M35 15 C35 13 38 12.5 44.5 12.5 C51 12.5 54 13 54 15 L55 21 C55 22.5 53 23 44.5 23 C36 23 34 22.5 34 21 Z" fill="#1e1e1e"/><path d="M33 23 H56 C57 28 57.5 33 56.5 38 C56 41 57 44 57.5 48 L57.5 80 C57.5 82 55 83 44.5 83 C34 83 31.5 82 31.5 80 L31.5 48 C32 44 33 41 32.5 38 C31.5 33 32 28 33 23 Z" fill="#c6d3e2"/><rect x="31.5" y="50" width="26" height="14" fill="#f9f9f5"/><text x="44.5" y="59" text-anchor="middle" font-family="Liberation Sans" font-weight="bold" font-style="italic" font-size="5" transform="rotate(-3 44.5 59)" fill="#1a1a1a">de pointe</text></svg>
  <svg class="a" style="left:576.3px;top:568.2px;filter:drop-shadow(0 0 1.5px rgba(180,160,120,.35))" width="89" height="90" viewBox="0 0 89 90"><rect x="0" y="0" width="89" height="90" rx="8.5" fill="#fefdfa"/><path d="M36 13 C40 16 49 16 53 13 L63 16 C68 18 72 22 73 27 L73 36 C69 37 65 37 61 36.5 L61 80 C52 81 35 81 26 80 L26 36.5 C22 37 18 37 13 36 L14 27 C15 22 19 18 24 16 Z" fill="#161616"/><text x="43.5" y="29" text-anchor="middle" font-family="Liberation Sans" font-weight="bold" font-style="italic" font-size="6.2" transform="rotate(-4 43.5 29)" fill="#f2f2f2">de pointe</text></svg>
  <svg class="a" style="left:673.8px;top:568.2px;filter:drop-shadow(0 0 1.5px rgba(180,160,120,.35))" width="89" height="90" viewBox="0 0 89 90"><rect x="0" y="0" width="89" height="90" rx="8.5" fill="#fefdfa"/><path d="M36 13 C40 16 49 16 53 13 L63 16 C68 18 72 22 73 27 L73 36 C69 37 65 37 61 36.5 L61 80 C52 81 35 81 26 80 L26 36.5 C22 37 18 37 13 36 L14 27 C15 22 19 18 24 16 Z" fill="#161616"/><text x="43.5" y="29" text-anchor="middle" font-family="Liberation Sans" font-weight="bold" font-style="italic" font-size="6.2" transform="rotate(-4 43.5 29)" fill="#bdbdbd">de pointe</text></svg>
  <svg class="a" style="left:770.6px;top:568.2px;filter:drop-shadow(0 0 1.5px rgba(180,160,120,.35))" width="89" height="90" viewBox="0 0 89 90"><rect x="0" y="0" width="89" height="90" rx="8.5" fill="#fefdfa"/><path d="M36 13 C40 16 49 16 53 13 L63 16 C68 18 72 22 73 27 L73 36 C69 37 65 37 61 36.5 L61 80 C52 81 35 81 26 80 L26 36.5 C22 37 18 37 13 36 L14 27 C15 22 19 18 24 16 Z" fill="#161616"/><text x="43.5" y="29" text-anchor="middle" font-family="Liberation Sans" font-weight="bold" font-style="italic" font-size="6.2" transform="rotate(-4 43.5 29)" fill="#d8d8d8">de pointe</text></svg>
  <div class="t" style="left:885.3px;top:382.4px;font-size:7px;font-weight:bold;color:#1e1a17">Team Jersey</div>
  <div class="t" style="left:885.3px;top:399.5px;font-size:4.9px;color:#938c80">Made from a blend of</div>
  <div class="t" style="left:885.3px;top:407.0px;font-size:4.9px;color:#938c80">polyester and Lycra, this</div>
  <div class="t" style="left:885.3px;top:414.5px;font-size:4.9px;color:#938c80">super breathable, lightweight</div>
  <div class="t" style="left:885.3px;top:422.0px;font-size:4.9px;color:#938c80">jersey is ideal for spring</div>
  <div class="t" style="left:885px;top:439.0px;font-size:9.2px;color:#4a443c"><span style="font-size:5.5px">€</span>112<span style="font-size:6px">00</span></div>
  <div class="t" style="left:885.3px;top:478.8px;font-size:7px;font-weight:bold;color:#1e1a17">Logo Bidon</div>
  <div class="t" style="left:885.3px;top:494.5px;font-size:4.9px;color:#938c80">Drinks bottle with ergonomic</div>
  <div class="t" style="left:885.3px;top:502.0px;font-size:4.9px;color:#938c80">cap with capacity of 500ml</div>
  <div class="t" style="left:885.3px;top:509.5px;font-size:4.9px;color:#938c80">Available in metal and BPA</div>
  <div class="t" style="left:885.3px;top:517.0px;font-size:4.9px;color:#938c80">free plastic for flexibility</div>
  <div class="t" style="left:885px;top:535.0px;font-size:9.2px;color:#4a443c"><span style="font-size:5.5px">€</span>11<span style="font-size:6px">00</span></div>
  <div class="t" style="left:885.3px;top:577.4px;font-size:7px;font-weight:bold;color:#1e1a17">Crew T-Shirt</div>
  <div class="t" style="left:885.3px;top:594.9px;font-size:4.9px;color:#938c80">Made from 100% organic</div>
  <div class="t" style="left:885.3px;top:602.4px;font-size:4.9px;color:#938c80">cotton, this soft-to-the-touch</div>
  <div class="t" style="left:885.3px;top:609.9px;font-size:4.9px;color:#938c80">crew neck T-shirt is perfect for</div>
  <div class="t" style="left:885.3px;top:617.4px;font-size:4.9px;color:#938c80">on and off the bike.</div>
  <div class="t" style="left:885px;top:633.0px;font-size:9.2px;color:#4a443c"><span style="font-size:5.5px">€</span>30<span style="font-size:6px">00</span></div>
   </div>
  </div>
  <!-- status bar -->
  <div class="a" style="left:95px;top:801px;width:1280px;height:14px;background:#2a2a2a;border-top:1px solid #1a1a1a"></div>
  <div class="a" style="left:95px;top:610px;width:154px;height:191px;border-top-right-radius:10px;overflow:hidden;background:#dcdcd8">
  <svg width="154" height="191" viewBox="0 0 154 191" style="position:absolute;left:0;top:0;filter:blur(1.1px)">
    <defs>
      <linearGradient id="wall" x1="0" y1="0" x2="1" y2="0"><stop offset="0" stop-color="#d0d1cd"/><stop offset="0.3" stop-color="#dedfdb"/><stop offset="1" stop-color="#e6e6e2"/></linearGradient>
      <linearGradient id="shirt" x1="0" y1="0" x2="1" y2="1"><stop offset="0" stop-color="#b0a796"/><stop offset="0.55" stop-color="#a69d8b"/><stop offset="1" stop-color="#958b79"/></linearGradient>
      <linearGradient id="skin" x1="0" y1="0" x2="1" y2="0.3"><stop offset="0" stop-color="#a87560"/><stop offset="0.6" stop-color="#c49580"/><stop offset="1" stop-color="#d2a891"/></linearGradient>
      <linearGradient id="arm" x1="0" y1="0" x2="1" y2="0"><stop offset="0" stop-color="#a87866"/><stop offset="1" stop-color="#c49682"/></linearGradient>
      <pattern id="knit" width="3" height="6" patternUnits="userSpaceOnUse"><rect width="3" height="6" fill="none"/><rect x="0" width="1" height="6" fill="#000" opacity=".08"/></pattern>
    </defs>
    <rect width="154" height="191" fill="url(#wall)"/>
    <rect x="9" y="0" width="38" height="47" fill="#efefec"/>
    <rect x="18.6" y="47" width="5.4" height="36" fill="#d6d6d0"/>
    <rect x="47.5" y="-2" width="63" height="25.5" fill="#ebebe8" stroke="#6a6a6a" stroke-width="1.6"/>
    <rect x="61" y="0" width="38.5" height="7" fill="#7c7c7a"/>
    <rect x="92.7" y="40" width="40" height="59" fill="#454545"/>
    <rect x="95.2" y="42.5" width="35" height="54" fill="#eeeeea"/>
    <rect x="99.6" y="47" width="27.4" height="48" fill="#262626"/>
    <ellipse cx="114.7" cy="70.3" rx="7" ry="6.5" fill="#c8c8c4" opacity=".85"/>
    <rect x="0" y="128" width="11.7" height="11" fill="#4e7a4e"/>
    <rect x="0" y="139" width="11.7" height="40" fill="#a84838"/>
    <path d="M105 149 C112 146 124 149 130 162 C121 164 111 158 105 149Z" fill="#66963e"/>
    <path d="M55 68 L86 66 L88 88 L55 90 Z" fill="#a97a66"/>
    <path d="M4 191 L9 99 C14 88 24 80 34 74 L56 72 L94 74 C104 78 114 82 119 85 C124 90 127 95 127 99 L132 140 L128 191 Z" fill="url(#shirt)"/>
    <path d="M4 191 L9 99 C14 88 24 80 34 74 L56 72 L94 74 C104 78 114 82 119 85 C124 90 127 95 127 99 L132 140 L128 191 Z" fill="url(#knit)"/>
    <path d="M34 74 C44 76 52 80 58 92 L66 100 L56 78 Z" fill="#bbb2a1"/>
    <path d="M94 74 C90 80 86 84 84 90 L90 96 L96 80 Z" fill="#bbb2a1"/>
    <path d="M77.6 80 L80 102 L88.6 84 Z" fill="#8a5644"/>
    <path d="M38 50 C35 46 36 56 39 62 C42 66 46 66 47 62 Z" fill="#b07a66"/>
    <path d="M44 24 C52 18 70 16 84 24 C88 30 90 38 90 46 L94 57 C93 59 90 59 88 60 C87 66 86 72 83 77 C78 80 66 80 58 77 C52 72 48 64 46 58 C42 50 42 36 44 24Z" fill="url(#skin)"/>
    <path d="M30.4 52.4 C29 40 31 25 40 15 C48 7 61 4 72 6 C80 8 86 13 87 20 L85 24 C78 20 68 20 60 23 C54 27 52 36 50 46 C46 46 42 45 38 47 C35 50 33 52 30.4 52.4Z" fill="#2a2522"/>
    <path d="M66 38 C70 36.5 75 36.5 78 38.5" stroke="#4a3020" stroke-width="1.5" fill="none"/>
    <path d="M82 38 C84.5 37 87 37 89 39" stroke="#4a3020" stroke-width="1.2" fill="none"/>
    <path d="M79 62 C82 63.5 85 63 87 61" stroke="#7a3a2e" stroke-width="1.6" fill="none"/>
    <path d="M110 112 C112 100 118 92 124 92 L132 86 C135 84 138 88 137 92 L137 104 C141 110 144 120 143 130 C141 140 134 146 126 146 C116 144 108 136 108 126 Z" fill="url(#arm)"/>
    <path d="M18 166 C36 158 80 140 112 128 C120 126 128 132 131 140 C132 148 126 152 118 154 C88 164 56 174 30 182 C20 183 14 172 18 166Z" fill="url(#arm)"/>
    <path d="M128 124 C138 130 148 140 155 148 L155 165 C146 160 136 154 127 150 Z" fill="#bb8c78"/>
    <rect x="0" y="176" width="154" height="15" fill="#3a3d43"/>
    <path d="M50 183 C90 178 120 180 154 174 V191 H50Z" fill="#60646a" opacity=".55"/>
  </svg>
  </div>
  <!-- MENU -->
  <div class="a" style="left:372.5px;top:114.5px;width:161px;height:145.5px;border-radius:6px;background:linear-gradient(180deg,#3a3937 0%,#3c3a37 40%,#4b463d 75%,#524b40 100%);border:0.5px solid #4a4a4a;box-shadow:0 4px 12px rgba(0,0,0,.45)"></div>
  <div class="a" style="left:376px;top:147px;width:154px;height:13.7px;border-radius:3px;background:#1f57c9"></div>
  <div class="t" style="left:388.8px;top:120.5px;font-size:9px;color:#ececec">Edit My Perfect STudio Studio ...</div>
  <div class="t" style="left:388.8px;top:135.8px;font-size:9px;color:#ececec">Revert My Perfect STudio Studio</div>
  <div class="t" style="left:388.8px;top:150.5px;font-size:9px;color:#ececec">Update My Perfect STudio Studio</div>
  <div class="t" style="left:388.8px;top:172.5px;font-size:9px;color:#ececec">Import...</div>
  <div class="t" style="left:388.8px;top:194.5px;font-size:9px;color:#ececec">Icon and Text</div>
  <div class="t" style="left:388.8px;top:209.3px;font-size:9px;color:#ececec">Icon Only</div>
  <div class="t" style="left:388.8px;top:223.5px;font-size:9px;color:#ececec">Auto</div>
  <div class="t" style="left:388.8px;top:246.0px;font-size:9px;color:#ececec">Rich Tooltips</div>
  <div class="a" style="left:383px;top:164.4px;width:143px;height:1px;background:#4e4c48"></div>
  <div class="a" style="left:383px;top:186px;width:143px;height:1px;background:#4e4c48"></div>
  <div class="a" style="left:383px;top:238px;width:143px;height:1px;background:#4e4c48"></div>
  <svg class="a" style="left:378.5px;top:193.5px" width="8" height="8" viewBox="0 0 8 8" fill="none" stroke="#eee" stroke-width="1.2"><path d="M1 4.3 L3 6.6 L7 0.8"/></svg>
  <svg class="a" style="left:433px;top:152px" width="10" height="15" viewBox="0 0 10 15"><path d="M1 1 V12 L3.6 9.6 L5.6 13.8 L7.4 13 L5.4 8.9 L8.8 8.7 Z" fill="#fff" stroke="#111" stroke-width="0.9"/></svg>
  <!-- STATUS CONTENT -->
  <div class="a" style="left:126px;top:802px;width:64px;height:13px;background:#1b1b1b"></div>
  <svg class="a" style="left:103px;top:804.5px" width="8" height="7" viewBox="0 0 8 7"><rect x="0.5" y="0.5" width="1" height="6" fill="#bdbdbd"/><path d="M7 0.5 V6.5 L2 3.5Z" fill="#bdbdbd"/></svg>
  <svg class="a" style="left:116px;top:804.5px" width="6" height="7" viewBox="0 0 6 7"><path d="M5.5 0.5 V6.5 L0.5 3.5Z" fill="#bdbdbd"/></svg>
  <div class="t" style="left:147px;top:804.5px;font-size:7.1px;color:#e8e8e8;-webkit-text-stroke:0.2px #e8e8e8">5 of 14</div>
  <svg class="a" style="left:193px;top:804.5px" width="6" height="7" viewBox="0 0 6 7"><path d="M0.5 0.5 V6.5 L5.5 3.5Z" fill="#bdbdbd"/></svg>
  <svg class="a" style="left:204px;top:804.5px" width="8" height="7" viewBox="0 0 8 7"><path d="M0.5 0.5 V6.5 L5.5 3.5Z" fill="#bdbdbd"/><rect x="6" y="0.5" width="1" height="6" fill="#bdbdbd"/></svg>
  <svg class="a" style="left:216.5px;top:803px" width="9" height="10" viewBox="0 0 9 10" fill="none" stroke="#999" stroke-width="0.9"><rect x="0.8" y="0.8" width="7.4" height="8.4" rx="1"/><path d="M2.5 0.8 V3.5 H6.5 V0.8"/></svg>
  <svg class="a" style="left:228.5px;top:804px" width="10" height="8" viewBox="0 0 10 8" fill="none" stroke="#999" stroke-width="0.9"><path d="M0.8 4 C3 1 7 1 9.2 4"/><circle cx="5" cy="5" r="2"/></svg>
  <svg class="a" style="left:242px;top:802.5px" width="10" height="11" viewBox="0 0 10 11" fill="none" stroke="#999" stroke-width="0.9"><rect x="0.8" y="0.8" width="6" height="7" rx="1"/><rect x="3" y="3" width="6" height="7" rx="1"/></svg>
  <div class="t" style="left:264.5px;top:804.3px;font-size:7.36px;color:#8a8a8a"><b style="color:#eee">Drag</b> to marquee select. <b style="color:#eee">Click</b> an object to select it. <b style="color:#eee">^</b> during marquee select to toggle intersection behaviour.</div>
  <div class="t" style="left:1202.6px;top:805.3px;font-size:7.1px;color:#e6e6e6;-webkit-text-stroke:0.2px #e6e6e6">De Pointe (57.8%)</div>
  <div class="a" style="left:1198px;top:801px;width:1px;height:14px;background:#1a1a1a"></div>
  <div class="a" style="left:603px;top:795.5px;width:369px;height:3px;border-radius:2px;background:#555"></div>
  <div class="a" style="left:1193px;top:366px;width:2.5px;height:39px;border-radius:2px;background:#555"></div>
</div></div>
</body></html>
